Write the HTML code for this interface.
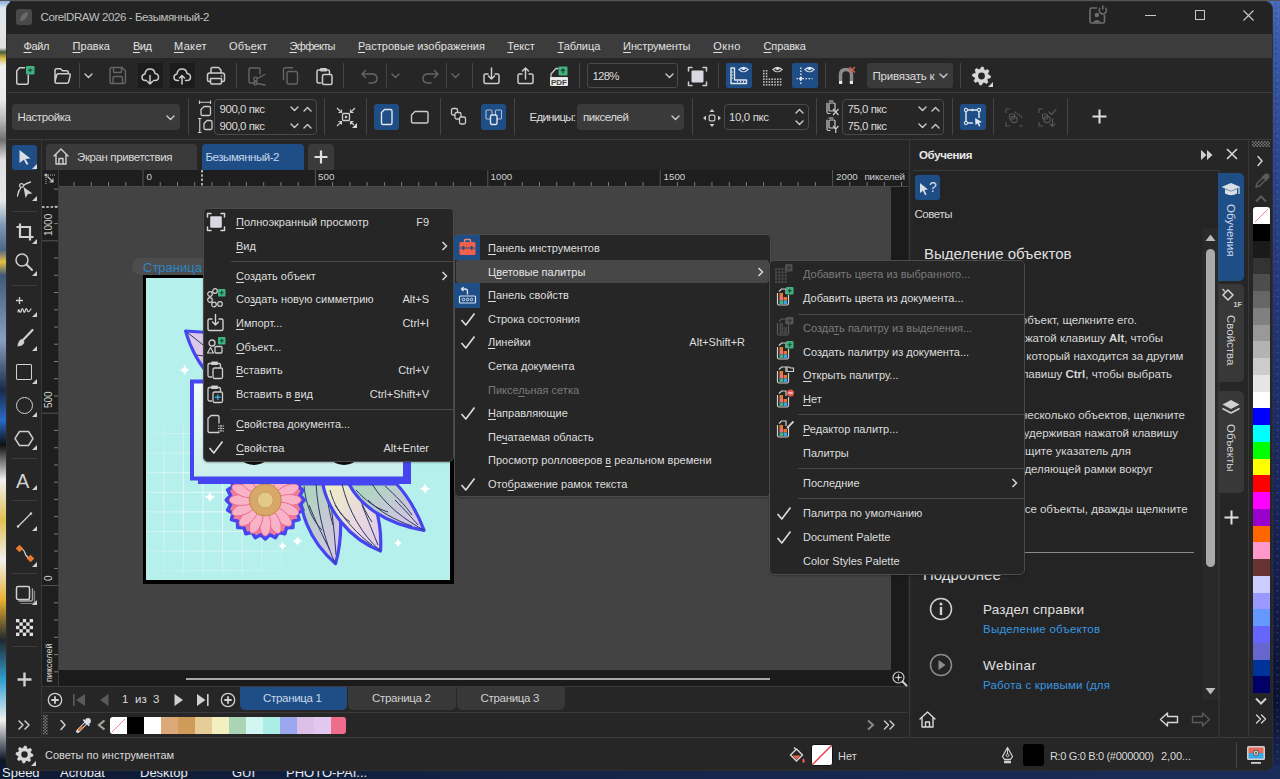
<!DOCTYPE html>
<html><head><meta charset="utf-8"><title>CorelDRAW</title>
<style>
*{margin:0;padding:0;box-sizing:border-box}
html,body{width:1280px;height:779px;overflow:hidden}
body{position:relative;background:#14213d;font-family:"Liberation Sans",sans-serif;font-size:11px;color:#dcdcdc}
.a{position:absolute}
.t{white-space:nowrap}
u{text-decoration:underline;text-underline-offset:2px;text-decoration-thickness:1px}
svg{overflow:visible}
</style></head><body>

<div class="a" style="left:0;top:0;width:10px;height:779px;background:linear-gradient(#7aa8d8 0px,#dde8f0 8px,#e6e6e6 30px,#e0e0e0 48px,#4a5a3a 52px,#d8b848 58px,#f0f0f0 66px,#e8e8e8 100px,#b8b8b8 120px,#707070 140px,#e0e0e0 160px,#e8e8e8 200px,#8098b8 225px,#506888 250px,#e8c040 262px,#405878 275px,#8aa0c0 340px,#1a2a48 390px,#2a6ac8 420px,#101010 445px,#f0f0f0 480px,#e0c050 520px,#f0f0f0 560px,#e8b030 600px,#202830 640px,#30a0d0 680px,#f0f0f0 720px,#101828 760px)"></div>
<div class="a" style="left:1266px;top:0;width:14px;height:779px;background:linear-gradient(#4a6ab8 0px,#3a5aa8 40px,#2e4890 150px,#24387a 300px,#1c2a60 450px,#141c48 600px,#0c1230 700px,#1a2a58 779px)"></div>
<div class="a" style="left:1266px;top:0;width:14px;height:779px;opacity:0.2;background-image:radial-gradient(circle at 30% 40%,#8aa8e8 0.7px,transparent 1.3px),radial-gradient(circle at 70% 70%,#0a1030 0.7px,transparent 1.3px);background-size:5px 7px,6px 5px"></div>
<div class="a" style="left:0;top:765px;width:1280px;height:14px;background:linear-gradient(90deg,#0e1a33,#15254a 50%,#1a2d5a)"></div>
<div class="a t" style="left:2px;top:766px;font-size:13px;line-height:13px;color:#e8e8e8">Speed</div>
<div class="a t" style="left:60px;top:766px;font-size:13px;line-height:13px;color:#e8e8e8">Acrobat</div>
<div class="a t" style="left:140px;top:766px;font-size:13px;line-height:13px;color:#e8e8e8">Desktop</div>
<div class="a t" style="left:232px;top:766px;font-size:13px;line-height:13px;color:#e8e8e8">GUI</div>
<div class="a t" style="left:286px;top:766px;font-size:13px;line-height:13px;color:#e8e8e8">PHOTO-PAI...</div>
<div class="a" style="left:0;top:0;width:1280px;height:1px;background:#555"></div>
<div class="a" style="left:6px;top:1px;width:1267px;height:770px;border-radius:8px;overflow:hidden;background:#262626;border:1px solid #2e2e2e"><div class="a" style="left:-7px;top:-2px;width:1280px;height:779px">
<div class="a" style="left:0px;top:0px;width:1280px;height:34px;background:#232323;"></div>
<div class="a" style="left:0px;top:34px;width:1280px;height:24px;background:#3c3c3c;"></div>
<div class="a" style="left:0px;top:58px;width:1280px;height:34px;background:#262626;"></div>
<div class="a" style="left:0px;top:92px;width:1280px;height:1px;background:#3a3a3a;"></div>
<div class="a" style="left:0px;top:93px;width:1280px;height:46px;background:#262626;"></div>
<div class="a" style="left:0px;top:139px;width:1280px;height:1px;background:#3a3a3a;"></div>
<div class="a" style="left:0px;top:140px;width:41px;height:597px;background:#262626;"></div>
<div class="a" style="left:41px;top:140px;width:1px;height:597px;background:#383838;"></div>
<div class="a" style="left:42px;top:140px;width:868px;height:30px;background:#262626;"></div>
<div class="a" style="left:42px;top:170px;width:866px;height:16px;background:#1e1e1e;"></div>
<div class="a" style="left:42px;top:186px;width:866px;height:1px;background:#4a4a4a;"></div>
<div class="a" style="left:42px;top:186px;width:16px;height:500px;background:#1e1e1e;"></div>
<div class="a" style="left:58px;top:170px;width:1px;height:516px;background:#3a3a3a;"></div>
<div class="a" style="left:59px;top:187px;width:832px;height:483px;background:#434343;"></div>
<div class="a" style="left:891px;top:187px;width:17px;height:483px;background:#1b1b1b;"></div>
<div class="a" style="left:59px;top:670px;width:849px;height:16px;background:#1b1b1b;"></div>
<div class="a" style="left:42px;top:686px;width:868px;height:1px;background:#3a3a3a;"></div>
<div class="a" style="left:42px;top:687px;width:868px;height:25px;background:#262626;"></div>
<div class="a" style="left:42px;top:712px;width:868px;height:1px;background:#3a3a3a;"></div>
<div class="a" style="left:42px;top:713px;width:868px;height:24px;background:#262626;"></div>
<div class="a" style="left:908px;top:140px;width:2px;height:597px;background:#262626;"></div>
<div class="a" style="left:909px;top:140px;width:1px;height:597px;background:#383838;"></div>
<div class="a" style="left:910px;top:140px;width:339px;height:597px;background:#262626;"></div>
<div class="a" style="left:913px;top:170px;width:305px;height:567px;background:#242424;border-top:1px solid #383838"></div>
<div class="a" style="left:1202px;top:228px;width:16px;height:472px;background:#292929;"></div>
<div class="a" style="left:1218px;top:170px;width:2px;height:567px;background:#303030;"></div>
<div class="a" style="left:1248px;top:140px;width:1px;height:597px;background:#383838;"></div>
<div class="a" style="left:1249px;top:140px;width:24px;height:597px;background:#262626;"></div>
<div class="a" style="left:0px;top:737px;width:1280px;height:1px;background:#3a3a3a;"></div>
<div class="a" style="left:0px;top:738px;width:1280px;height:34px;background:#262626;"></div>
<div class="a" style="left:16px;top:9px;width:16px;height:16px;border-radius:3px;background:#4a4a4a"></div>
<svg class="a" style="left:16px;top:9px;" width="16" height="16" viewBox="0 0 16 16"><path d="M4 12 C4 7 8 3 12 3 C12 8 9 12 4 12 Z" fill="#6a6a6a"/></svg>
<div class="a t" style="left:40.5px;top:12.27px;font-size:11.5px;line-height:11.5px;color:#c0c0c0;font-weight:400;letter-spacing:-0.399px;">CorelDRAW 2026 - Безымянный-2</div>
<svg class="a" style="left:1088px;top:4px;" width="20" height="20" viewBox="0 0 20 20"><path d="M9 4 H3.5 Q2 4 2 5.5 V17.5 Q2 19 3.5 19 H15 Q16.5 19 16.5 17.5 V11" fill="none" stroke="#6e6e6e" stroke-width="1.6"/><circle cx="8.8" cy="11" r="2.2" fill="#6e6e6e"/><path d="M4.5 18.5 Q8.8 13.5 13.2 18.5 Z" fill="#6e6e6e"/><path d="M12.2 3.8 A3.6 3.6 0 1 0 17.4 3.8" fill="none" stroke="#6e6e6e" stroke-width="1.5"/><path d="M14.8 1.5 V5.5" stroke="#6e6e6e" stroke-width="1.5"/></svg>
<div class="a" style="left:1145px;top:15px;width:11px;height:1px;background:#c8c8c8;"></div>
<div class="a" style="left:1195px;top:10px;width:10px;height:10px;border:1px solid #c8c8c8"></div>
<svg class="a" style="left:1243px;top:10px;" width="11" height="11" viewBox="0 0 11 11"><path d="M0.5 0.5 L10.5 10.5 M10.5 0.5 L0.5 10.5" stroke="#c8c8c8" stroke-width="1.1"/></svg>
<div class="a t" style="left:23.5px;top:41.39px;font-size:11px;line-height:11px;color:#e0e0e0;font-weight:400;letter-spacing:-0.415px;"><u>Ф</u>айл</div>
<div class="a t" style="left:72.5px;top:41.39px;font-size:11px;line-height:11px;color:#e0e0e0;font-weight:400;letter-spacing:0.048px;"><u>П</u>равка</div>
<div class="a t" style="left:133.0px;top:41.39px;font-size:11px;line-height:11px;color:#e0e0e0;font-weight:400;letter-spacing:-0.500px;"><u>В</u>ид</div>
<div class="a t" style="left:174.0px;top:41.39px;font-size:11px;line-height:11px;color:#e0e0e0;font-weight:400;letter-spacing:0.342px;"><u>М</u>акет</div>
<div class="a t" style="left:229.0px;top:41.39px;font-size:11px;line-height:11px;color:#e0e0e0;font-weight:400;letter-spacing:0.128px;">Объ<u>е</u>кт</div>
<div class="a t" style="left:289.5px;top:41.39px;font-size:11px;line-height:11px;color:#e0e0e0;font-weight:400;letter-spacing:-0.668px;"><u>Э</u>ффекты</div>
<div class="a t" style="left:358.0px;top:41.39px;font-size:11px;line-height:11px;color:#e0e0e0;font-weight:400;letter-spacing:0.037px;"><u>Р</u>астровые изображения</div>
<div class="a t" style="left:507.3px;top:41.39px;font-size:11px;line-height:11px;color:#e0e0e0;font-weight:400;letter-spacing:-0.074px;"><u>Т</u>екст</div>
<div class="a t" style="left:557.5px;top:41.39px;font-size:11px;line-height:11px;color:#e0e0e0;font-weight:400;letter-spacing:-0.055px;"><u>Т</u>аблица</div>
<div class="a t" style="left:623.1px;top:41.39px;font-size:11px;line-height:11px;color:#e0e0e0;font-weight:400;letter-spacing:-0.119px;"><u>И</u>нструменты</div>
<div class="a t" style="left:713.3px;top:41.39px;font-size:11px;line-height:11px;color:#e0e0e0;font-weight:400;letter-spacing:0.480px;"><u>О</u>кно</div>
<div class="a t" style="left:763.5px;top:41.39px;font-size:11px;line-height:11px;color:#e0e0e0;font-weight:400;letter-spacing:-0.125px;"><u>С</u>правка</div>
<svg class="a" style="left:15px;top:66px;" width="20" height="20" viewBox="0 0 20 20"><path d="M4.5 1.75 H9.5 M1.75 5 V16.5 Q1.75 18.25 3.5 18.25 H11.5 Q13.25 18.25 13.25 16.5 V9 M1.75 5 L4.5 1.75" fill="none" stroke="#cccccc" stroke-width="1.5" stroke-linejoin="round" stroke-linecap="round"/><rect x="11" y="0" width="8.5" height="8.5" rx="1" fill="#3fb27f"/><path d="M15.25 2.2 V6.3 M13.2 4.25 H17.3" stroke="#1e5a40" stroke-width="1.3"/></svg>
<svg class="a" style="left:53px;top:67px;" width="20" height="18" viewBox="0 0 20 18"><path d="M2 14.5 V3.5 Q2 1.75 3.75 1.75 H7.5 L9.5 3.75 H13.5 Q15.25 3.75 15.25 5.5 V6.75 M2 14.5 L3.75 7.75 Q4.2 6.75 5.5 6.75 H16 Q17.6 6.75 17.2 8.3 L15.8 14.5 Q15.4 16.25 13.8 16.25 H3.75 Q2 16.25 2 14.5 Z" fill="none" stroke="#cccccc" stroke-width="1.5" stroke-linejoin="round" stroke-linecap="round"/></svg>
<div class="a" style="left:79px;top:63px;width:1px;height:25px;background:#444444;"></div>
<svg class="a" style="left:84px;top:73px;" width="9" height="6" viewBox="0 0 9 6"><path d="M1 1 L4.5 4.5 L8 1" fill="none" stroke="#cccccc" stroke-width="1.4" stroke-linejoin="round" stroke-linecap="round"/></svg>
<svg class="a" style="left:108px;top:66px;" width="19" height="19" viewBox="0 0 19 19"><path d="M2 3 Q2 1.5 3.5 1.5 H14 L17.5 5 V15.5 Q17.5 17.5 15.5 17.5 H3.5 Q2 17.5 2 16 Z M5.5 1.5 V5.5 Q5.5 6.5 6.5 6.5 H12.5 Q13.5 6.5 13.5 5.5 V1.5 M5 17.5 V12 Q5 10.5 6.5 10.5 H13 Q14.5 10.5 14.5 12 V17.5" fill="none" stroke="#666666" stroke-width="1.4" stroke-linejoin="round" stroke-linecap="round"/></svg>
<div class="a" style="left:138px;top:63px;width:25px;height:25px;background:#1c1c1c;"></div>
<div class="a" style="left:170px;top:63px;width:25px;height:25px;background:#1c1c1c;"></div>
<svg class="a" style="left:141px;top:67px;" width="19" height="19" viewBox="0 0 19 19"><path d="M5.5 13.5 H4.5 Q1 13.5 1 10.25 Q1 7.5 4 7 Q4.5 2 9 2 Q13.5 2 14 6.5 Q17.5 6.75 17.5 10.25 Q17.5 13.5 14 13.5 H12.5" fill="none" stroke="#cccccc" stroke-width="1.5" stroke-linejoin="round" stroke-linecap="round"/><path d="M9 8.5 V17 M6.5 14.5 L9 17 L11.5 14.5" fill="none" stroke="#cccccc" stroke-width="1.5" stroke-linejoin="round" stroke-linecap="round"/></svg>
<svg class="a" style="left:173px;top:67px;" width="19" height="19" viewBox="0 0 19 19"><path d="M5.5 13.5 H4.5 Q1 13.5 1 10.25 Q1 7.5 4 7 Q4.5 2 9 2 Q13.5 2 14 6.5 Q17.5 6.75 17.5 10.25 Q17.5 13.5 14 13.5 H12.5" fill="none" stroke="#cccccc" stroke-width="1.5" stroke-linejoin="round" stroke-linecap="round"/><path d="M9 17 V8.5 M6.5 11 L9 8.5 L11.5 11" fill="none" stroke="#cccccc" stroke-width="1.5" stroke-linejoin="round" stroke-linecap="round"/></svg>
<svg class="a" style="left:206px;top:66px;" width="20" height="20" viewBox="0 0 20 20"><path d="M5 7 V3 Q5 1.5 6.5 1.5 H12.5 L15 4 V7" fill="none" stroke="#cccccc" stroke-width="1.5" stroke-linejoin="round" stroke-linecap="round"/><path d="M4.5 15.5 H3 Q1.5 15.5 1.5 14 V9 Q1.5 7 3.5 7 H16.5 Q18.5 7 18.5 9 V14 Q18.5 15.5 17 15.5 H15.5" fill="none" stroke="#cccccc" stroke-width="1.5" stroke-linejoin="round" stroke-linecap="round"/><path d="M4.5 12.5 H15.5 V16.5 Q15.5 18 14 18 H6 Q4.5 18 4.5 16.5 Z" fill="none" stroke="#cccccc" stroke-width="1.5" stroke-linejoin="round" stroke-linecap="round"/><circle cx="15.5" cy="10" r="0.8" fill="#cccccc"/></svg>
<div class="a" style="left:236px;top:63px;width:1px;height:25px;background:#444444;"></div>
<svg class="a" style="left:247px;top:66px;" width="20" height="20" viewBox="0 0 20 20"><path d="M8 17 H3.5 Q2 17 2 15.5 V3.5 Q2 2 3.5 2 H11.5 Q13 2 13 3.5 V8" fill="none" stroke="#666666" stroke-width="1.4" stroke-linejoin="round" stroke-linecap="round"/><circle cx="8.5" cy="13" r="1.8" fill="none" stroke="#666666" stroke-width="1.3" stroke-linejoin="round" stroke-linecap="round"/><circle cx="8.5" cy="17.3" r="1.8" fill="none" stroke="#666666" stroke-width="1.3" stroke-linejoin="round" stroke-linecap="round"/><path d="M10.2 12.5 L18 8.5 M10.2 17.5 L18 19" fill="none" stroke="#666666" stroke-width="1.3" stroke-linejoin="round" stroke-linecap="round"/></svg>
<svg class="a" style="left:281px;top:66px;" width="20" height="20" viewBox="0 0 20 20"><path d="M2.5 13.5 V3.5 Q2.5 1.8 4.2 1.8 H11.5" fill="none" stroke="#666666" stroke-width="1.4" stroke-linejoin="round" stroke-linecap="round"/><rect x="6" y="5.5" width="10.5" height="12.5" rx="2" fill="none" stroke="#666666" stroke-width="1.4" stroke-linejoin="round" stroke-linecap="round"/></svg>
<svg class="a" style="left:315px;top:66px;" width="20" height="20" viewBox="0 0 20 20"><path d="M5 4 H3.5 Q2 4 2 5.5 V15.5 Q2 17 3.5 17 H6" fill="none" stroke="#cccccc" stroke-width="1.5" stroke-linejoin="round" stroke-linecap="round"/><path d="M11.5 4 H13 Q14.5 4 14.5 5.5 V8" fill="none" stroke="#cccccc" stroke-width="1.5" stroke-linejoin="round" stroke-linecap="round"/><rect x="5" y="2" width="7" height="3.5" rx="1" fill="#cccccc"/><rect x="7.5" y="8.5" width="9.5" height="10" rx="1.5" fill="none" stroke="#cccccc" stroke-width="1.5" stroke-linejoin="round" stroke-linecap="round"/></svg>
<div class="a" style="left:343px;top:63px;width:1px;height:25px;background:#444444;"></div>
<svg class="a" style="left:360px;top:67px;" width="20" height="18" viewBox="0 0 20 18"><path d="M5.5 3.5 L2 7 L5.5 10.5 M2 7 H12 Q17 7 17 11.5 Q17 16 12 16 H9" fill="none" stroke="#666666" stroke-width="1.4" stroke-linejoin="round" stroke-linecap="round"/></svg>
<div class="a" style="left:386px;top:63px;width:1px;height:25px;background:#444444;"></div>
<svg class="a" style="left:391px;top:73px;" width="9" height="6" viewBox="0 0 9 6"><path d="M1 1 L4.5 4.5 L8 1" fill="none" stroke="#666666" stroke-width="1.4" stroke-linejoin="round" stroke-linecap="round"/></svg>
<svg class="a" style="left:420px;top:67px;" width="20" height="18" viewBox="0 0 20 18"><path d="M14.5 3.5 L18 7 L14.5 10.5 M18 7 H8 Q3 7 3 11.5 Q3 16 8 16 H11" fill="none" stroke="#666666" stroke-width="1.4" stroke-linejoin="round" stroke-linecap="round"/></svg>
<div class="a" style="left:446px;top:63px;width:1px;height:25px;background:#444444;"></div>
<svg class="a" style="left:451px;top:73px;" width="9" height="6" viewBox="0 0 9 6"><path d="M1 1 L4.5 4.5 L8 1" fill="none" stroke="#666666" stroke-width="1.4" stroke-linejoin="round" stroke-linecap="round"/></svg>
<div class="a" style="left:472px;top:63px;width:1px;height:25px;background:#444444;"></div>
<svg class="a" style="left:482px;top:66px;" width="20" height="20" viewBox="0 0 20 20"><path d="M6 8 H3.5 Q2 8 2 9.5 V16 Q2 17.5 3.5 17.5 H15.5 Q17 17.5 17 16 V9.5 Q17 8 15.5 8 H13" fill="none" stroke="#cccccc" stroke-width="1.5" stroke-linejoin="round" stroke-linecap="round"/><path d="M9.5 2 V13 M6.5 10 L9.5 13 L12.5 10" fill="none" stroke="#cccccc" stroke-width="1.5" stroke-linejoin="round" stroke-linecap="round"/></svg>
<svg class="a" style="left:516px;top:66px;" width="20" height="20" viewBox="0 0 20 20"><path d="M6 8 H3.5 Q2 8 2 9.5 V16 Q2 17.5 3.5 17.5 H15.5 Q17 17.5 17 16 V9.5 Q17 8 15.5 8 H13" fill="none" stroke="#cccccc" stroke-width="1.5" stroke-linejoin="round" stroke-linecap="round"/><path d="M9.5 13 V2 M6.5 5 L9.5 2 L12.5 5" fill="none" stroke="#cccccc" stroke-width="1.5" stroke-linejoin="round" stroke-linecap="round"/></svg>
<svg class="a" style="left:549px;top:66px;" width="21" height="21" viewBox="0 0 21 21"><path d="M2 11 V8 L7 2.5 H9" fill="none" stroke="#cccccc" stroke-width="1.3" stroke-linejoin="round" stroke-linecap="round"/><rect x="9.5" y="0.5" width="9" height="9" rx="1" fill="#3fb27f"/><path d="M14 7.5 V3 M12 5 L14 3 L16 5" stroke="#1a4a34" stroke-width="1.2" fill="none"/><rect x="1" y="11" width="18" height="9" rx="1" fill="#e8e8e8"/><text x="10" y="18.5" font-family="Liberation Sans" font-size="8" font-weight="700" fill="#444" text-anchor="middle">PDF</text></svg>
<div class="a" style="left:579px;top:63px;width:1px;height:25px;background:#444444;"></div>
<div class="a" style="left:587px;top:63px;width:91px;height:25px;border:1px solid #4a4a4a;border-radius:3px;background:#262626"></div>
<div class="a t" style="left:592.5px;top:70.77px;font-size:11.5px;line-height:11.5px;color:#dcdcdc;font-weight:400;letter-spacing:-0.804px;">128%</div>
<svg class="a" style="left:665px;top:73px;" width="9" height="6" viewBox="0 0 9 6"><path d="M1 1 L4.5 4.5 L8 1" fill="none" stroke="#cccccc" stroke-width="1.4" stroke-linejoin="round" stroke-linecap="round"/></svg>
<svg class="a" style="left:687px;top:66px;" width="21" height="21" viewBox="0 0 21 21"><path d="M1.5 5 V1.5 H5 M16 1.5 H19.5 V5 M19.5 16 V19.5 H16 M5 19.5 H1.5 V16" fill="none" stroke="#cccccc" stroke-width="1.5" stroke-linejoin="round" stroke-linecap="round"/><rect x="4.5" y="4.5" width="12" height="12" rx="1" fill="#d8d8e0"/></svg>
<div class="a" style="left:718px;top:63px;width:1px;height:25px;background:#444444;"></div>
<div class="a" style="left:726px;top:63px;width:26px;height:25px;border-radius:2px;background:#1f4d85"></div>
<svg class="a" style="left:729px;top:66px;" width="20" height="20" viewBox="0 0 20 20"><path d="M2 2 V17.5 H17.5 V14 H5.5 V2 Z" fill="none" stroke="#e0e6ee" stroke-width="1.4" stroke-linejoin="round" stroke-linecap="round"/><path d="M2.5 6 H4 M2.5 9 H4 M2.5 12 H4 M8.5 16.5 V15 M11.5 16.5 V15 M14.5 16.5 V15" stroke="#e0e6ee" stroke-width="1"/><path d="M9 3.5 Q14.5 -2 20 3.5 Q14.5 9 9 3.5 Z" fill="#e0e6ee"/><path d="M11.5 3 Q14.5 6.5 17.5 3" fill="none" stroke="#1f4d85" stroke-width="1.3"/></svg>
<svg class="a" style="left:762px;top:66px;" width="21" height="21" viewBox="0 0 21 21"><g fill="#bdbdbd"><rect x="1.0" y="4.0" width="1.6" height="1.6"/><rect x="1.0" y="6.8" width="1.6" height="1.6"/><rect x="1.0" y="9.6" width="1.6" height="1.6"/><rect x="1.0" y="12.399999999999999" width="1.6" height="1.6"/><rect x="1.0" y="15.2" width="1.6" height="1.6"/><rect x="1.0" y="18.0" width="1.6" height="1.6"/><rect x="3.8" y="4.0" width="1.6" height="1.6"/><rect x="3.8" y="6.8" width="1.6" height="1.6"/><rect x="3.8" y="9.6" width="1.6" height="1.6"/><rect x="3.8" y="12.399999999999999" width="1.6" height="1.6"/><rect x="3.8" y="15.2" width="1.6" height="1.6"/><rect x="3.8" y="18.0" width="1.6" height="1.6"/><rect x="6.6" y="12.399999999999999" width="1.6" height="1.6"/><rect x="6.6" y="15.2" width="1.6" height="1.6"/><rect x="6.6" y="18.0" width="1.6" height="1.6"/><rect x="9.399999999999999" y="12.399999999999999" width="1.6" height="1.6"/><rect x="9.399999999999999" y="15.2" width="1.6" height="1.6"/><rect x="9.399999999999999" y="18.0" width="1.6" height="1.6"/><rect x="12.2" y="12.399999999999999" width="1.6" height="1.6"/><rect x="12.2" y="15.2" width="1.6" height="1.6"/><rect x="12.2" y="18.0" width="1.6" height="1.6"/><rect x="15.0" y="12.399999999999999" width="1.6" height="1.6"/><rect x="15.0" y="15.2" width="1.6" height="1.6"/><rect x="15.0" y="18.0" width="1.6" height="1.6"/><rect x="17.799999999999997" y="12.399999999999999" width="1.6" height="1.6"/><rect x="17.799999999999997" y="15.2" width="1.6" height="1.6"/><rect x="17.799999999999997" y="18.0" width="1.6" height="1.6"/></g><path d="M10 3.5 Q15.5 -2 21 3.5 Q15.5 9 10 3.5 Z" fill="#d8d8d8"/><path d="M12.5 3 Q15.5 6.5 18.5 3" fill="none" stroke="#262626" stroke-width="1.3"/></svg>
<div class="a" style="left:792px;top:63px;width:26px;height:25px;border-radius:2px;background:#1f4d85"></div>
<svg class="a" style="left:795px;top:66px;" width="20" height="20" viewBox="0 0 20 20"><path d="M5.8 1.5 V18 M1.5 12.6 H17.5" stroke="#dfe6ee" stroke-width="1.4" stroke-dasharray="1.5 1.5"/><circle cx="5.8" cy="12.6" r="1.7" fill="#dfe6ee"/><path d="M9 3.5 Q14.5 -2 20 3.5 Q14.5 9 9 3.5 Z" fill="#e0e6ee"/><path d="M11.5 3 Q14.5 6.5 17.5 3" fill="none" stroke="#1f4d85" stroke-width="1.3"/></svg>
<div class="a" style="left:825px;top:63px;width:1px;height:25px;background:#444444;"></div>
<svg class="a" style="left:837px;top:66px;" width="20" height="20" viewBox="0 0 20 20"><path d="M3.5 15 V9 Q3.5 3.5 9 3.5 Q14.5 3.5 14.5 9 V15" fill="none" stroke="#8a8a8a" stroke-width="3.5"/><rect x="2" y="15" width="3.2" height="3" fill="#e8e8e8"/><rect x="12.8" y="15" width="3.2" height="3" fill="#e8e8e8"/><path d="M12.5 1 L18 6.5 M18 1 L12.5 6.5" stroke="#e0604a" stroke-width="1.3"/></svg>
<div class="a" style="left:867px;top:63px;width:86px;height:25px;border-radius:3px;background:#3a3a3a"></div>
<div class="a t" style="left:872.5px;top:70.77px;font-size:11.5px;line-height:11.5px;color:#dcdcdc;font-weight:400;letter-spacing:-0.219px;">Привяза<u>т</u>ь к</div>
<svg class="a" style="left:939px;top:73px;" width="9" height="6" viewBox="0 0 9 6"><path d="M1 1 L4.5 4.5 L8 1" fill="none" stroke="#cccccc" stroke-width="1.4" stroke-linejoin="round" stroke-linecap="round"/></svg>
<div class="a" style="left:960px;top:63px;width:1px;height:25px;background:#444444;"></div>
<svg class="a" style="left:971px;top:66px;" width="24" height="22" viewBox="0 0 24 22"><polygon points="10.50,1.00 12.26,1.17 13.05,3.85 14.20,4.46 16.86,3.64 17.98,5.00 16.65,7.45 17.03,8.70 19.50,10.00 19.33,11.76 16.65,12.55 16.04,13.70 16.86,16.36 15.50,17.48 13.05,16.15 11.80,16.53 10.50,19.00 8.74,18.83 7.95,16.15 6.80,15.54 4.14,16.36 3.02,15.00 4.35,12.55 3.97,11.30 1.50,10.00 1.67,8.24 4.35,7.45 4.96,6.30 4.14,3.64 5.50,2.52 7.95,3.85 9.20,3.47" fill="#d8d8d8" stroke="#d8d8d8" stroke-width="0.8" stroke-linejoin="round"/><circle cx="10.5" cy="10" r="3.42" fill="#262626"/><path d="M22 16 V21 H17 Z" fill="#d8d8d8"/></svg>
<div class="a" style="left:12px;top:104px;width:168px;height:26px;border-radius:4px;background:#3a3a3a"></div>
<div class="a t" style="left:17.5px;top:111.77px;font-size:11.5px;line-height:11.5px;color:#dcdcdc;font-weight:400;letter-spacing:-0.389px;">Настройка</div>
<svg class="a" style="left:166px;top:115px;" width="9" height="6" viewBox="0 0 9 6"><path d="M1 1 L4.5 4.5 L8 1" fill="none" stroke="#cccccc" stroke-width="1.4" stroke-linejoin="round" stroke-linecap="round"/></svg>
<div class="a" style="left:188px;top:98px;width:1px;height:37px;background:#444444;"></div>
<svg class="a" style="left:197px;top:99px;" width="16" height="36" viewBox="0 0 16 36"><path d="M2.5 1.5 V5 M13.5 1.5 V5 M2.5 3.25 H13.5" stroke="#cccccc" stroke-width="1.2"/><path d="M7 7.5 H12 Q13.5 7.5 13.5 9 V15 Q13.5 16.5 12 16.5 H5.5 Q4 16.5 4 15 V10.5 Z" fill="none" stroke="#cccccc" stroke-width="1.3" stroke-linejoin="round" stroke-linecap="round"/><path d="M1 19.5 H4.5 M1 33.5 H4.5 M2.75 19.5 V33.5" stroke="#cccccc" stroke-width="1.2"/><path d="M10 21.5 H13.5 Q15 21.5 15 23 V29 Q15 30.5 13.5 30.5 H8.5 Q7 30.5 7 29 V24.5 Z" fill="none" stroke="#cccccc" stroke-width="1.3" stroke-linejoin="round" stroke-linecap="round"/></svg>
<div class="a" style="left:214px;top:99px;width:103px;height:36px;border:1px solid #4a4a4a;border-radius:4px"></div>
<div class="a t" style="left:219.5px;top:103.77px;font-size:11.5px;line-height:11.5px;color:#dcdcdc;font-weight:400;letter-spacing:-0.451px;">900,0 пкс</div>
<div class="a t" style="left:219.5px;top:120.77px;font-size:11.5px;line-height:11.5px;color:#dcdcdc;font-weight:400;letter-spacing:-0.451px;">900,0 пкс</div>
<svg class="a" style="left:290px;top:106px;" width="9" height="6" viewBox="0 0 9 6"><path d="M1 1 L4.5 4.5 L8 1" fill="none" stroke="#cccccc" stroke-width="1.4" stroke-linejoin="round" stroke-linecap="round"/></svg>
<svg class="a" style="left:303px;top:106px;" width="9" height="6" viewBox="0 0 9 6"><path d="M1 5 L4.5 1.5 L8 5" fill="none" stroke="#cccccc" stroke-width="1.4" stroke-linejoin="round" stroke-linecap="round"/></svg>
<svg class="a" style="left:290px;top:123px;" width="9" height="6" viewBox="0 0 9 6"><path d="M1 1 L4.5 4.5 L8 1" fill="none" stroke="#cccccc" stroke-width="1.4" stroke-linejoin="round" stroke-linecap="round"/></svg>
<svg class="a" style="left:303px;top:123px;" width="9" height="6" viewBox="0 0 9 6"><path d="M1 5 L4.5 1.5 L8 5" fill="none" stroke="#cccccc" stroke-width="1.4" stroke-linejoin="round" stroke-linecap="round"/></svg>
<div class="a" style="left:324px;top:98px;width:1px;height:37px;background:#444444;"></div>
<svg class="a" style="left:335px;top:106px;" width="23" height="23" viewBox="0 0 23 23"><path d="M2 2 L6.5 6.5 M6.5 3.5 V6.5 H3.5 M20 2 L15.5 6.5 M15.5 3.5 V6.5 H18.5 M2 20 L6.5 15.5 M6.5 18.5 V15.5 H3.5" stroke="#cccccc" stroke-width="1.2" fill="none"/><rect x="7.5" y="7.5" width="7" height="7" rx="1" fill="none" stroke="#cccccc" stroke-width="1.3" stroke-linejoin="round" stroke-linecap="round"/><circle cx="11" cy="11" r="1.3" fill="#cccccc"/><path d="M15.5 15.5 L19 19 M15.5 18.5 V15.5 H18.5" stroke="#cccccc" stroke-width="1.2" fill="none"/><path d="M22 17 V22 H17 Z" fill="#d8d8d8"/></svg>
<div class="a" style="left:366px;top:98px;width:1px;height:37px;background:#444444;"></div>
<div class="a" style="left:374px;top:104px;width:25px;height:26px;border-radius:3px;background:#1f4d85"></div>
<svg class="a" style="left:379px;top:108px;" width="16" height="18" viewBox="0 0 16 18"><path d="M5.5 1.5 H11.5 Q13 1.5 13 3 V15 Q13 16.5 11.5 16.5 H4 Q2.5 16.5 2.5 15 V4.5 Z" fill="none" stroke="#e0e6ee" stroke-width="1.4" stroke-linejoin="round" stroke-linecap="round"/></svg>
<svg class="a" style="left:410px;top:109px;" width="20" height="16" viewBox="0 0 20 16"><path d="M5 2.5 H16.5 Q18 2.5 18 4 V12.5 Q18 14 16.5 14 H3 Q1.5 14 1.5 12.5 V6 Z" fill="none" stroke="#cccccc" stroke-width="1.4" stroke-linejoin="round" stroke-linecap="round"/></svg>
<div class="a" style="left:440px;top:98px;width:1px;height:37px;background:#444444;"></div>
<svg class="a" style="left:450px;top:107px;" width="20" height="20" viewBox="0 0 20 20"><rect x="1.5" y="1.5" width="6" height="6.5" rx="1.5" fill="none" stroke="#cccccc" stroke-width="1.3" stroke-linejoin="round" stroke-linecap="round"/><rect x="5" y="5.5" width="6" height="6.5" rx="1.5" fill="#262626" fill="none" stroke="#cccccc" stroke-width="1.3" stroke-linejoin="round" stroke-linecap="round"/><rect x="9.5" y="10" width="6" height="7" rx="1.5" fill="#262626" fill="none" stroke="#cccccc" stroke-width="1.3" stroke-linejoin="round" stroke-linecap="round"/></svg>
<div class="a" style="left:481px;top:104px;width:25px;height:26px;border-radius:3px;background:#1f4d85"></div>
<svg class="a" style="left:484px;top:107px;" width="20" height="20" viewBox="0 0 20 20"><rect x="2" y="3" width="6" height="9" rx="1" fill="none" stroke="#aabbd0" stroke-width="1.1" stroke-linejoin="round" stroke-linecap="round"/><rect x="11.5" y="3" width="6" height="9" rx="1" fill="none" stroke="#aabbd0" stroke-width="1.1" stroke-linejoin="round" stroke-linecap="round"/><rect x="6.5" y="8" width="6.5" height="9.5" rx="1.5" fill="#1f4d85" fill="none" stroke="#e0e6ee" stroke-width="1.4" stroke-linejoin="round" stroke-linecap="round"/></svg>
<div class="a" style="left:514px;top:98px;width:1px;height:37px;background:#444444;"></div>
<div class="a t" style="left:529.5px;top:111.77px;font-size:11.5px;line-height:11.5px;color:#dcdcdc;font-weight:400;letter-spacing:-0.732px;">Единицы:</div>
<div class="a" style="left:577px;top:104px;width:107px;height:26px;border-radius:4px;background:#3a3a3a"></div>
<div class="a t" style="left:583px;top:111.77px;font-size:11.5px;line-height:11.5px;color:#dcdcdc;font-weight:400;letter-spacing:-0.444px;">пикселей</div>
<svg class="a" style="left:671px;top:115px;" width="9" height="6" viewBox="0 0 9 6"><path d="M1 1 L4.5 4.5 L8 1" fill="none" stroke="#cccccc" stroke-width="1.4" stroke-linejoin="round" stroke-linecap="round"/></svg>
<div class="a" style="left:692px;top:98px;width:1px;height:37px;background:#444444;"></div>
<svg class="a" style="left:702px;top:108px;" width="20" height="20" viewBox="0 0 20 20"><path d="M10 1 L12.5 4 H7.5 Z M10 19 L12.5 16 H7.5 Z M1 10 L4 7.5 V12.5 Z M19 10 L16 7.5 V12.5 Z" fill="#cccccc"/><rect x="7.2" y="7.2" width="5.6" height="5.6" rx="1" fill="none" stroke="#cccccc" stroke-width="1.2" stroke-linejoin="round" stroke-linecap="round"/></svg>
<div class="a" style="left:724px;top:104px;width:85px;height:26px;border:1px solid #4a4a4a;border-radius:4px"></div>
<div class="a t" style="left:729px;top:111.77px;font-size:11.5px;line-height:11.5px;color:#dcdcdc;font-weight:400;letter-spacing:-0.388px;">10,0 пкс</div>
<svg class="a" style="left:795px;top:108px;" width="9" height="6" viewBox="0 0 9 6"><path d="M1 5 L4.5 1.5 L8 5" fill="none" stroke="#cccccc" stroke-width="1.4" stroke-linejoin="round" stroke-linecap="round"/></svg>
<svg class="a" style="left:795px;top:120px;" width="9" height="6" viewBox="0 0 9 6"><path d="M1 1 L4.5 4.5 L8 1" fill="none" stroke="#cccccc" stroke-width="1.4" stroke-linejoin="round" stroke-linecap="round"/></svg>
<div class="a" style="left:816px;top:98px;width:1px;height:37px;background:#444444;"></div>
<svg class="a" style="left:825px;top:99px;" width="16" height="36" viewBox="0 0 16 36"><path d="M4 2 H8 M2 4 V13 Q2 14.5 3.5 14.5 H5" fill="none" stroke="#cccccc" stroke-width="1.2" stroke-linejoin="round" stroke-linecap="round"/><rect x="4" y="4" width="6" height="8" rx="1" fill="none" stroke="#cccccc" stroke-width="1.2" stroke-linejoin="round" stroke-linecap="round"/><path d="M8 10 L13.5 16 M13.5 10 L8 16" stroke="#cccccc" stroke-width="1.2"/><path d="M4 19 H8 M2 21 V30 Q2 31.5 3.5 31.5 H5" fill="none" stroke="#cccccc" stroke-width="1.2" stroke-linejoin="round" stroke-linecap="round"/><rect x="4" y="21" width="6" height="8" rx="1" fill="none" stroke="#cccccc" stroke-width="1.2" stroke-linejoin="round" stroke-linecap="round"/><path d="M8 27 L10.75 30 L13.5 27 M10.75 30 V34" stroke="#cccccc" stroke-width="1.2" fill="none"/></svg>
<div class="a" style="left:842px;top:99px;width:102px;height:36px;border:1px solid #4a4a4a;border-radius:4px"></div>
<div class="a t" style="left:847.5px;top:103.77px;font-size:11.5px;line-height:11.5px;color:#dcdcdc;font-weight:400;letter-spacing:-0.459px;">75,0 пкс</div>
<div class="a t" style="left:847.5px;top:120.77px;font-size:11.5px;line-height:11.5px;color:#dcdcdc;font-weight:400;letter-spacing:-0.459px;">75,0 пкс</div>
<svg class="a" style="left:918px;top:106px;" width="9" height="6" viewBox="0 0 9 6"><path d="M1 1 L4.5 4.5 L8 1" fill="none" stroke="#cccccc" stroke-width="1.4" stroke-linejoin="round" stroke-linecap="round"/></svg>
<svg class="a" style="left:931px;top:106px;" width="9" height="6" viewBox="0 0 9 6"><path d="M1 5 L4.5 1.5 L8 5" fill="none" stroke="#cccccc" stroke-width="1.4" stroke-linejoin="round" stroke-linecap="round"/></svg>
<svg class="a" style="left:918px;top:123px;" width="9" height="6" viewBox="0 0 9 6"><path d="M1 1 L4.5 4.5 L8 1" fill="none" stroke="#cccccc" stroke-width="1.4" stroke-linejoin="round" stroke-linecap="round"/></svg>
<svg class="a" style="left:931px;top:123px;" width="9" height="6" viewBox="0 0 9 6"><path d="M1 5 L4.5 1.5 L8 5" fill="none" stroke="#cccccc" stroke-width="1.4" stroke-linejoin="round" stroke-linecap="round"/></svg>
<div class="a" style="left:952px;top:98px;width:1px;height:37px;background:#444444;"></div>
<div class="a" style="left:960px;top:104px;width:26px;height:26px;border-radius:3px;background:#1f4d85"></div>
<svg class="a" style="left:963px;top:107px;" width="20" height="20" viewBox="0 0 20 20"><path d="M3 3 H16 V11 M3 3 V16 H10" fill="none" stroke="#dfe6ee" stroke-width="1.5"/><circle cx="3" cy="3" r="1.6" fill="#1f4d85" stroke="#dfe6ee" stroke-width="1.1"/><circle cx="16" cy="3" r="1.6" fill="#1f4d85" stroke="#dfe6ee" stroke-width="1.1"/><circle cx="3" cy="16" r="1.6" fill="#1f4d85" stroke="#dfe6ee" stroke-width="1.1"/><circle cx="9.5" cy="3" r="1.2" fill="#dfe6ee"/><path d="M12 11 L19 15 L16 16 L17.5 19 L16 19.5 L14.5 16.5 L12.5 18 Z" fill="#dfe6ee"/></svg>
<div class="a" style="left:993px;top:98px;width:1px;height:37px;background:#444444;"></div>
<svg class="a" style="left:1004px;top:107px;" width="21" height="21" viewBox="0 0 21 21"><path d="M2 6 V2 H6 M2 15 V19 H6 M19 19 H15" stroke="#555555" stroke-width="1.2" fill="none"/><rect x="5.5" y="7" width="5" height="5" rx="1" fill="none" stroke="#555555" stroke-width="1.2" stroke-linejoin="round" stroke-linecap="round"/><circle cx="10" cy="12.5" r="3.2" fill="none" stroke="#555555" stroke-width="1.2" stroke-linejoin="round" stroke-linecap="round"/><path d="M11 5 L19 11" stroke="#555555" stroke-width="1.6" stroke-dasharray="1.5 1"/></svg>
<svg class="a" style="left:1037px;top:107px;" width="21" height="21" viewBox="0 0 21 21"><path d="M2 6 V2 H6 M2 15 V19 H6" stroke="#555555" stroke-width="1.2" fill="none"/><rect x="5.5" y="7" width="5" height="5" rx="1" fill="none" stroke="#555555" stroke-width="1.2" stroke-linejoin="round" stroke-linecap="round"/><circle cx="10" cy="12.5" r="3.2" fill="none" stroke="#555555" stroke-width="1.2" stroke-linejoin="round" stroke-linecap="round"/><path d="M12 5 L14.5 7.5 L19 2.5" fill="none" stroke="#555555" stroke-width="1.2" stroke-linejoin="round" stroke-linecap="round"/><path d="M13 17 L15.5 19.5 L18 17 M15.5 12 V19.5" fill="none" stroke="#555555" stroke-width="1.2" stroke-linejoin="round" stroke-linecap="round"/></svg>
<div class="a" style="left:1067px;top:98px;width:1px;height:37px;background:#444444;"></div>
<svg class="a" style="left:1092px;top:109px;" width="15" height="15" viewBox="0 0 15 15"><path d="M7.5 0.5 V14.5 M0.5 7.5 H14.5" stroke="#e0e0e0" stroke-width="2"/></svg>
<div class="a" style="left:12px;top:145px;width:25px;height:25px;border-radius:3px;background:#1f4d85"></div>
<svg class="a" style="left:18px;top:149px;" width="14" height="16" viewBox="0 0 14 16"><path d="M1.5 1 L12.5 9.5 L7.5 10 L10.5 15 L8.5 15.8 L5.8 10.8 L1.5 14 Z" fill="#d8dde6"/></svg>
<svg class="a" style="left:31.5px;top:164px;" width="5" height="5" viewBox="0 0 5 5"><path d="M5 0 V5 H0 Z" fill="#d8dde6"/></svg>
<svg class="a" style="left:15px;top:180px;" width="20" height="20" viewBox="0 0 20 20"><path d="M2.5 16 Q4 5 15.5 2" fill="none" stroke="#d0d0d0" stroke-width="1.3" stroke-linejoin="round" stroke-linecap="round"/><circle cx="6.5" cy="5.5" r="1.9" fill="#262626" stroke="#d0d0d0" stroke-width="1.2"/><path d="M8.5 7 L17.5 13.5 L13 14 L10.5 18 Z" fill="#d0d0d0"/></svg>
<svg class="a" style="left:32px;top:196px;" width="5" height="5" viewBox="0 0 5 5"><path d="M5 0 V5 H0 Z" fill="#d0d0d0"/></svg>
<div class="a" style="left:12px;top:211px;width:25px;height:1px;background:#3c3c3c;"></div>
<svg class="a" style="left:15px;top:222px;" width="20" height="22" viewBox="0 0 20 22"><path d="M5 1.5 V15 H18.5 M1.5 5 H15 V18.5" fill="none" stroke="#d0d0d0" stroke-width="2.2"/></svg>
<svg class="a" style="left:32px;top:239px;" width="5" height="5" viewBox="0 0 5 5"><path d="M5 0 V5 H0 Z" fill="#d0d0d0"/></svg>
<svg class="a" style="left:14px;top:252px;" width="22" height="22" viewBox="0 0 22 22"><circle cx="8" cy="8" r="6" fill="none" stroke="#d0d0d0" stroke-width="1.5" stroke-linejoin="round" stroke-linecap="round"/><path d="M12.5 12.5 L18 18" stroke="#d0d0d0" stroke-width="2" stroke-linecap="round"/></svg>
<svg class="a" style="left:32px;top:271px;" width="5" height="5" viewBox="0 0 5 5"><path d="M5 0 V5 H0 Z" fill="#d0d0d0"/></svg>
<div class="a" style="left:12px;top:285px;width:25px;height:1px;background:#3c3c3c;"></div>
<svg class="a" style="left:15px;top:296px;" width="20" height="20" viewBox="0 0 20 20"><path d="M4.5 1 V8 M1 4.5 H8" stroke="#d0d0d0" stroke-width="1.3"/><path d="M3 16 Q3.5 12 4.5 15 Q5.5 18 6.5 14 Q7.5 11 8.5 15 Q9.5 18 10.5 14 Q11.5 11 12.5 15 Q13.5 17 16 13" fill="none" stroke="#d0d0d0" stroke-width="1.2" stroke-linejoin="round" stroke-linecap="round"/></svg>
<svg class="a" style="left:32px;top:312px;" width="5" height="5" viewBox="0 0 5 5"><path d="M5 0 V5 H0 Z" fill="#d0d0d0"/></svg>
<svg class="a" style="left:15px;top:328px;" width="20" height="21" viewBox="0 0 20 21"><path d="M17.5 2 L8 12" stroke="#d0d0d0" stroke-width="2.2" stroke-linecap="round"/><path d="M7 11 Q3 12 2.5 18.5 Q8.5 18 9.5 14 Z" fill="#d0d0d0"/></svg>
<svg class="a" style="left:32px;top:346px;" width="5" height="5" viewBox="0 0 5 5"><path d="M5 0 V5 H0 Z" fill="#d0d0d0"/></svg>
<div class="a" style="left:16px;top:364px;width:16px;height:16px;border:1.5px solid #d0d0d0;border-radius:1px"></div>
<svg class="a" style="left:32px;top:379px;" width="5" height="5" viewBox="0 0 5 5"><path d="M5 0 V5 H0 Z" fill="#d0d0d0"/></svg>
<div class="a" style="left:15.5px;top:396.5px;width:17px;height:17px;border:1.5px solid #d0d0d0;border-radius:50%"></div>
<svg class="a" style="left:32px;top:412px;" width="5" height="5" viewBox="0 0 5 5"><path d="M5 0 V5 H0 Z" fill="#d0d0d0"/></svg>
<svg class="a" style="left:14px;top:430px;" width="21" height="17" viewBox="0 0 21 17"><path d="M5.5 1.5 H14.5 L19 8.5 L14.5 15.5 H5.5 L1 8.5 Z" fill="none" stroke="#d0d0d0" stroke-width="1.4" stroke-linejoin="round" stroke-linecap="round"/></svg>
<svg class="a" style="left:32px;top:445px;" width="5" height="5" viewBox="0 0 5 5"><path d="M5 0 V5 H0 Z" fill="#d0d0d0"/></svg>
<div class="a" style="left:12px;top:458px;width:25px;height:1px;background:#3c3c3c;"></div>
<div class="a t" style="left:16px;top:471.07px;font-size:20px;line-height:20px;color:#d0d0d0;font-weight:400;">A</div>
<svg class="a" style="left:32px;top:485px;" width="5" height="5" viewBox="0 0 5 5"><path d="M5 0 V5 H0 Z" fill="#d0d0d0"/></svg>
<div class="a" style="left:12px;top:500px;width:25px;height:1px;background:#3c3c3c;"></div>
<svg class="a" style="left:15px;top:511px;" width="20" height="18" viewBox="0 0 20 18"><path d="M3 15.5 L16 2.5" stroke="#d0d0d0" stroke-width="1.2"/><circle cx="3" cy="15.5" r="1.2" fill="#d0d0d0"/><circle cx="16" cy="2.5" r="1.2" fill="#d0d0d0"/></svg>
<svg class="a" style="left:32px;top:526px;" width="5" height="5" viewBox="0 0 5 5"><path d="M5 0 V5 H0 Z" fill="#d0d0d0"/></svg>
<svg class="a" style="left:15px;top:544px;" width="20" height="20" viewBox="0 0 20 20"><path d="M4.5 4.5 Q9 5 10 9 Q11 13 15.5 14.5" fill="none" stroke="#d0d0d0" stroke-width="1.2" stroke-linejoin="round" stroke-linecap="round"/><rect x="1.8" y="1.8" width="5.4" height="5.4" fill="#e8792a" transform="rotate(45 4.5 4.5)"/><rect x="12.8" y="11.8" width="5.4" height="5.4" fill="#e8792a" transform="rotate(45 15.5 14.5)"/></svg>
<svg class="a" style="left:32px;top:562px;" width="5" height="5" viewBox="0 0 5 5"><path d="M5 0 V5 H0 Z" fill="#d0d0d0"/></svg>
<div class="a" style="left:12px;top:573px;width:25px;height:1px;background:#3c3c3c;"></div>
<svg class="a" style="left:15px;top:585px;" width="20" height="20" viewBox="0 0 20 20"><path d="M4 16 H15.5 Q17.5 16 17.5 14 V4" fill="none" stroke="#a8a8a8" stroke-width="1.4" stroke-linejoin="round" stroke-linecap="round"/><path d="M6 18.5 H17 Q19.5 18.5 19.5 16 V6" fill="none" stroke="#c0c0c0" stroke-width="1.2" stroke-linejoin="round" stroke-linecap="round" opacity="0.6"/><rect x="1.5" y="1.5" width="13" height="13" rx="1.5" fill="none" stroke="#d0d0d0" stroke-width="1.5" stroke-linejoin="round" stroke-linecap="round"/></svg>
<svg class="a" style="left:32px;top:600px;" width="5" height="5" viewBox="0 0 5 5"><path d="M5 0 V5 H0 Z" fill="#d0d0d0"/></svg>
<svg class="a" style="left:16px;top:619px;" width="17" height="17" viewBox="0 0 17 17"><rect width="17" height="17" fill="#dedede"/><rect x="0.0" y="3.4" width="3.4" height="3.4" fill="#1a1a1a"/><rect x="0.0" y="10.2" width="3.4" height="3.4" fill="#1a1a1a"/><rect x="3.4" y="0.0" width="3.4" height="3.4" fill="#1a1a1a"/><rect x="3.4" y="6.8" width="3.4" height="3.4" fill="#1a1a1a"/><rect x="3.4" y="13.6" width="3.4" height="3.4" fill="#1a1a1a"/><rect x="6.8" y="3.4" width="3.4" height="3.4" fill="#1a1a1a"/><rect x="6.8" y="10.2" width="3.4" height="3.4" fill="#1a1a1a"/><rect x="10.2" y="0.0" width="3.4" height="3.4" fill="#1a1a1a"/><rect x="10.2" y="6.8" width="3.4" height="3.4" fill="#1a1a1a"/><rect x="10.2" y="13.6" width="3.4" height="3.4" fill="#1a1a1a"/><rect x="13.6" y="3.4" width="3.4" height="3.4" fill="#1a1a1a"/><rect x="13.6" y="10.2" width="3.4" height="3.4" fill="#1a1a1a"/></svg>
<div class="a" style="left:12px;top:646px;width:25px;height:1px;background:#3c3c3c;"></div>
<svg class="a" style="left:17px;top:672px;" width="15" height="15" viewBox="0 0 15 15"><path d="M7.5 0.5 V14.5 M0.5 7.5 H14.5" stroke="#d0d0d0" stroke-width="2.4"/></svg>
<svg class="a" style="left:17px;top:719px;" width="16" height="12" viewBox="0 0 16 12"><path d="M2 2 L6 6 L2 10 M8 2 L12 6 L8 10" fill="none" stroke="#d0d0d0" stroke-width="1.5" stroke-linejoin="round" stroke-linecap="round"/></svg>
<div class="a" style="left:46px;top:144px;width:151px;height:26px;border-radius:4px 4px 0 0;background:#3a3a3a"></div>
<svg class="a" style="left:52px;top:147px;" width="18" height="19" viewBox="0 0 18 19"><path d="M2 9 L9 2 L16 9 M4 7.5 V17 H14 V7.5 M7 17 V11.5 H11 V17" fill="none" stroke="#d0d0d0" stroke-width="1.4" stroke-linejoin="round" stroke-linecap="round"/></svg>
<div class="a t" style="left:77px;top:151.77px;font-size:11.5px;line-height:11.5px;color:#d8d8d8;font-weight:400;letter-spacing:-0.381px;">Экран приветствия</div>
<div class="a" style="left:202px;top:144px;width:102px;height:26px;border-radius:4px 4px 0 0;background:#1f4d85"></div>
<div class="a t" style="left:205.5px;top:151.77px;font-size:11.5px;line-height:11.5px;color:#c8d8ea;font-weight:400;letter-spacing:-0.453px;">Безымянный-2</div>
<div class="a" style="left:308px;top:144px;width:26px;height:26px;border-radius:4px 4px 0 0;background:#3a3a3a"></div>
<svg class="a" style="left:314px;top:150px;" width="14" height="14" viewBox="0 0 14 14"><path d="M7 0.5 V13.5 M0.5 7 H13.5" stroke="#e0e0e0" stroke-width="2.2"/></svg>
<svg class="a" style="left:43px;top:172px;" width="14" height="13" viewBox="0 0 14 13"><circle cx="3" cy="3" r="1.6" fill="#bbb"/><path d="M3 5 V12 M5 3 H12" stroke="#bbb" stroke-width="1" stroke-dasharray="1 1"/><path d="M4.5 4.5 L10 10 M10 6.5 V10 H6.5" stroke="#ccc" stroke-width="1.1" fill="none"/></svg>
<svg class="a" style="left:0px;top:170px;" width="910" height="16" viewBox="0 0 910 16"><rect x="73.5" y="12" width="1" height="4" fill="#7a7a7a"/><rect x="90.8" y="12" width="1" height="4" fill="#7a7a7a"/><rect x="108.0" y="12" width="1" height="4" fill="#7a7a7a"/><rect x="125.3" y="12" width="1" height="4" fill="#7a7a7a"/><rect x="142.5" y="0" width="1" height="16" fill="#555"/><rect x="159.7" y="12" width="1" height="4" fill="#7a7a7a"/><rect x="177.0" y="12" width="1" height="4" fill="#7a7a7a"/><rect x="194.2" y="12" width="1" height="4" fill="#7a7a7a"/><rect x="211.5" y="12" width="1" height="4" fill="#7a7a7a"/><rect x="228.7" y="12" width="1" height="4" fill="#7a7a7a"/><rect x="245.9" y="12" width="1" height="4" fill="#7a7a7a"/><rect x="263.2" y="12" width="1" height="4" fill="#7a7a7a"/><rect x="280.4" y="12" width="1" height="4" fill="#7a7a7a"/><rect x="297.7" y="12" width="1" height="4" fill="#7a7a7a"/><rect x="314.9" y="0" width="1" height="16" fill="#555"/><rect x="332.1" y="12" width="1" height="4" fill="#7a7a7a"/><rect x="349.4" y="12" width="1" height="4" fill="#7a7a7a"/><rect x="366.6" y="12" width="1" height="4" fill="#7a7a7a"/><rect x="383.9" y="12" width="1" height="4" fill="#7a7a7a"/><rect x="401.1" y="12" width="1" height="4" fill="#7a7a7a"/><rect x="418.3" y="12" width="1" height="4" fill="#7a7a7a"/><rect x="435.6" y="12" width="1" height="4" fill="#7a7a7a"/><rect x="452.8" y="12" width="1" height="4" fill="#7a7a7a"/><rect x="470.1" y="12" width="1" height="4" fill="#7a7a7a"/><rect x="487.3" y="0" width="1" height="16" fill="#555"/><rect x="504.5" y="12" width="1" height="4" fill="#7a7a7a"/><rect x="521.8" y="12" width="1" height="4" fill="#7a7a7a"/><rect x="539.0" y="12" width="1" height="4" fill="#7a7a7a"/><rect x="556.3" y="12" width="1" height="4" fill="#7a7a7a"/><rect x="573.5" y="12" width="1" height="4" fill="#7a7a7a"/><rect x="590.7" y="12" width="1" height="4" fill="#7a7a7a"/><rect x="608.0" y="12" width="1" height="4" fill="#7a7a7a"/><rect x="625.2" y="12" width="1" height="4" fill="#7a7a7a"/><rect x="642.5" y="12" width="1" height="4" fill="#7a7a7a"/><rect x="659.7" y="0" width="1" height="16" fill="#555"/><rect x="676.9" y="12" width="1" height="4" fill="#7a7a7a"/><rect x="694.2" y="12" width="1" height="4" fill="#7a7a7a"/><rect x="711.4" y="12" width="1" height="4" fill="#7a7a7a"/><rect x="728.7" y="12" width="1" height="4" fill="#7a7a7a"/><rect x="745.9" y="12" width="1" height="4" fill="#7a7a7a"/><rect x="763.1" y="12" width="1" height="4" fill="#7a7a7a"/><rect x="780.4" y="12" width="1" height="4" fill="#7a7a7a"/><rect x="797.6" y="12" width="1" height="4" fill="#7a7a7a"/><rect x="814.9" y="12" width="1" height="4" fill="#7a7a7a"/><rect x="832.1" y="0" width="1" height="16" fill="#555"/><rect x="849.3" y="12" width="1" height="4" fill="#7a7a7a"/><rect x="866.6" y="12" width="1" height="4" fill="#7a7a7a"/><rect x="883.8" y="12" width="1" height="4" fill="#7a7a7a"/><rect x="901.1" y="12" width="1" height="4" fill="#7a7a7a"/></svg>
<div class="a t" style="left:146.5px;top:172.20px;font-size:9.8px;line-height:9.8px;color:#d0d0d0;font-weight:400;">0</div>
<div class="a t" style="left:318px;top:172.20px;font-size:9.8px;line-height:9.8px;color:#d0d0d0;font-weight:400;">500</div>
<div class="a t" style="left:490.5px;top:172.20px;font-size:9.8px;line-height:9.8px;color:#d0d0d0;font-weight:400;">1000</div>
<div class="a t" style="left:663.5px;top:172.20px;font-size:9.8px;line-height:9.8px;color:#d0d0d0;font-weight:400;">1500</div>
<div class="a t" style="left:836px;top:172.20px;font-size:9.8px;line-height:9.8px;color:#d0d0d0;font-weight:400;">2000</div>
<div class="a" style="left:862px;top:171px;width:46px;height:11px;background:#1e1e1e;"></div>
<div class="a t" style="left:864.5px;top:172.20px;font-size:9.8px;line-height:9.8px;color:#d0d0d0;font-weight:400;letter-spacing:-0.192px;">пикселей</div>
<svg class="a" style="left:201px;top:170px;" width="2" height="16" viewBox="0 0 2 16"><path d="M1 0 V16" stroke="#d8d8d8" stroke-width="1.5" stroke-dasharray="2.5 1.8"/></svg>
<svg class="a" style="left:42px;top:186px;" width="16" height="500" viewBox="0 0 16 500"><rect x="12" y="485.3" width="4" height="1" fill="#7a7a7a"/><rect x="12" y="468.1" width="4" height="1" fill="#7a7a7a"/><rect x="12" y="450.8" width="4" height="1" fill="#7a7a7a"/><rect x="12" y="433.6" width="4" height="1" fill="#7a7a7a"/><rect x="12" y="416.3" width="4" height="1" fill="#7a7a7a"/><rect x="0" y="399.1" width="16" height="1" fill="#555"/><rect x="12" y="381.9" width="4" height="1" fill="#7a7a7a"/><rect x="12" y="364.6" width="4" height="1" fill="#7a7a7a"/><rect x="12" y="347.4" width="4" height="1" fill="#7a7a7a"/><rect x="12" y="330.1" width="4" height="1" fill="#7a7a7a"/><rect x="12" y="312.9" width="4" height="1" fill="#7a7a7a"/><rect x="12" y="295.7" width="4" height="1" fill="#7a7a7a"/><rect x="12" y="278.4" width="4" height="1" fill="#7a7a7a"/><rect x="12" y="261.2" width="4" height="1" fill="#7a7a7a"/><rect x="12" y="243.9" width="4" height="1" fill="#7a7a7a"/><rect x="0" y="226.7" width="16" height="1" fill="#555"/><rect x="12" y="209.5" width="4" height="1" fill="#7a7a7a"/><rect x="12" y="192.2" width="4" height="1" fill="#7a7a7a"/><rect x="12" y="175.0" width="4" height="1" fill="#7a7a7a"/><rect x="12" y="157.7" width="4" height="1" fill="#7a7a7a"/><rect x="12" y="140.5" width="4" height="1" fill="#7a7a7a"/><rect x="12" y="123.3" width="4" height="1" fill="#7a7a7a"/><rect x="12" y="106.0" width="4" height="1" fill="#7a7a7a"/><rect x="12" y="88.8" width="4" height="1" fill="#7a7a7a"/><rect x="12" y="71.5" width="4" height="1" fill="#7a7a7a"/><rect x="0" y="54.3" width="16" height="1" fill="#555"/><rect x="12" y="37.1" width="4" height="1" fill="#7a7a7a"/><rect x="12" y="19.8" width="4" height="1" fill="#7a7a7a"/><rect x="12" y="2.6" width="4" height="1" fill="#7a7a7a"/></svg>
<div class="a t" style="left:44px;top:235.8px;font-size:10px;line-height:10px;color:#d0d0d0;transform-origin:0 0;transform:rotate(-90deg)">1000</div>
<div class="a t" style="left:44px;top:408.20000000000005px;font-size:10px;line-height:10px;color:#d0d0d0;transform-origin:0 0;transform:rotate(-90deg)">500</div>
<div class="a t" style="left:44px;top:580.6px;font-size:10px;line-height:10px;color:#d0d0d0;transform-origin:0 0;transform:rotate(-90deg)">0</div>
<div class="a t" style="left:44.5px;top:682px;font-size:9px;line-height:9px;color:#d0d0d0;transform-origin:0 0;transform:rotate(-90deg)">пикселей</div>
<svg class="a" style="left:42px;top:206px;" width="16" height="2" viewBox="0 0 16 2"><path d="M0 1 H16" stroke="#d8d8d8" stroke-width="1.5" stroke-dasharray="2.5 1.8"/></svg>
<div class="a" style="left:132px;top:258px;width:100px;height:17px;border-radius:8.5px;background:#4d4d4d"></div>
<div class="a t" style="left:143px;top:260.50px;font-size:13px;line-height:13px;color:#2a86c4;font-weight:400;">Страница 1</div>
<svg class="a" style="left:143px;top:275px;" width="311" height="309" viewBox="0 0 311 309"><defs><linearGradient id="fr" x1="0" y1="0" x2="0" y2="1"><stop offset="0" stop-color="#f0fcfb"/><stop offset="1" stop-color="#c9efec"/></linearGradient><linearGradient id="lf" x1="0" y1="0" x2="1" y2="1"><stop offset="0" stop-color="#a8d8b8"/><stop offset="0.6" stop-color="#c8c8d8"/><stop offset="1" stop-color="#dcc8ec"/></linearGradient><linearGradient id="lf2" x1="0" y1="0" x2="1" y2="1"><stop offset="0" stop-color="#f0f0c0"/><stop offset="0.6" stop-color="#e8d8e0"/><stop offset="1" stop-color="#dcc8ec"/></linearGradient><radialGradient id="gf" gradientUnits="userSpaceOnUse" cx="75" cy="225" r="105"><stop offset="0" stop-color="#ffffff" stop-opacity="1"/><stop offset="0.55" stop-color="#ffffff" stop-opacity="0.6"/><stop offset="1" stop-color="#ffffff" stop-opacity="0"/></radialGradient><pattern id="gp" width="19.6" height="19.6" patternUnits="userSpaceOnUse" x="0.7" y="1.2"><path d="M0 0 V19.6 M0 0 H19.6" stroke="#ffffff" stroke-width="1.4" fill="none"/></pattern><mask id="gm"><rect x="0" y="0" width="311" height="309" fill="url(#gf)"/></mask></defs><rect x="0" y="0" width="311" height="309" fill="#000"/><rect x="3" y="3" width="304" height="302" fill="#b6f0ec"/><rect x="3" y="150" width="200" height="150" fill="url(#gp)" mask="url(#gm)"/><path d="M42.5 56 L72 58 L69 103 Q51 85 42.5 56 Z" fill="#dcc8e8" stroke="#4646f0" stroke-width="3" stroke-linejoin="round"/><path d="M45 58 L69 77 M53 80 L69 82" stroke="#2a3a6a" stroke-width="1" fill="none"/><path d="M41.69999999999999 89.5 Q42.68999999999999 94.01 47.19999999999999 95 Q42.68999999999999 95.99 41.69999999999999 100.5 Q40.70999999999999 95.99 36.19999999999999 95 Q40.70999999999999 94.01 41.69999999999999 89.5 Z" fill="#ffffff"/><path d="M156.6,209.0 C156.0,235.0 165.0,265.0 192.6,288.7 C199.0,265.0 200.0,240.0 193.0,209.0 Z" fill="url(#lf)" stroke="#4646f0" stroke-width="3.2" stroke-linejoin="round"/><path d="M173.0,209.0 C175.0,240.0 183.0,270.0 192.6,288.7" stroke="#2c3a62" stroke-width="1" fill="none"/><path d="M161.0,211.0 C163.0,230.0 169.0,245.0 179.0,255.0" stroke="#2c3a62" stroke-width="1" fill="none"/><path d="M183.0,211.0 C184.0,225.0 187.0,240.0 190.0,250.0" stroke="#2c3a62" stroke-width="1" fill="none"/><path d="M166.0,230.0 C172.0,245.0 179.0,260.0 187.0,275.0" stroke="#2c3a62" stroke-width="1" fill="none"/><path d="M188.0,230.0 C190.0,245.0 192.0,265.0 193.0,280.0" stroke="#2c3a62" stroke-width="1" fill="none"/><path d="M179.7,209.0 C185.0,235.0 205.0,263.0 237.5,276.0 C239.0,253.0 234.0,230.0 223.0,209.0 Z" fill="url(#lf2)" stroke="#4646f0" stroke-width="3.2" stroke-linejoin="round"/><path d="M199.0,209.0 C205.0,235.0 219.0,260.0 237.5,276.0" stroke="#2c3a62" stroke-width="1" fill="none"/><path d="M187.0,215.0 C191.0,230.0 197.0,240.0 207.0,247.0" stroke="#2c3a62" stroke-width="1" fill="none"/><path d="M212.0,211.0 C217.0,225.0 222.0,237.0 229.0,247.0" stroke="#2c3a62" stroke-width="1" fill="none"/><path d="M192.0,230.0 C202.0,245.0 215.0,260.0 229.0,270.0" stroke="#2c3a62" stroke-width="1" fill="none"/><path d="M219.0,230.0 C225.0,245.0 231.0,260.0 235.0,270.0" stroke="#2c3a62" stroke-width="1" fill="none"/><path d="M206.0,209.0 C217.0,230.0 242.0,249.0 281.1,255.3 C274.0,237.0 263.0,219.0 253.5,209.0 Z" fill="url(#lf)" stroke="#4646f0" stroke-width="3.2" stroke-linejoin="round"/><path d="M229.0,209.0 C242.0,230.0 262.0,245.0 281.1,255.3" stroke="#2c3a62" stroke-width="1" fill="none"/><path d="M213.0,215.0 C222.0,225.0 232.0,233.0 245.0,237.0" stroke="#2c3a62" stroke-width="1" fill="none"/><path d="M242.0,211.0 C252.0,220.0 262.0,230.0 269.0,240.0" stroke="#2c3a62" stroke-width="1" fill="none"/><path d="M225.0,225.0 C237.0,237.0 252.0,245.0 269.0,251.0" stroke="#2c3a62" stroke-width="1" fill="none"/><path d="M252.0,225.0 C262.0,235.0 269.0,243.0 275.0,250.0" stroke="#2c3a62" stroke-width="1" fill="none"/><polygon points="161.3,225.0 157.0,229.6 160.0,235.1 154.6,238.4 156.1,244.5 150.1,246.3 149.9,252.6 143.6,252.8 141.8,258.8 135.7,257.3 132.4,262.7 126.9,259.7 122.3,264.0 117.7,259.7 112.2,262.7 108.9,257.3 102.8,258.8 101.0,252.8 94.7,252.6 94.5,246.3 88.5,244.5 90.0,238.4 84.6,235.1 87.6,229.6 83.3,225.0 87.6,220.4 84.6,214.9 90.0,211.6 88.5,205.5 94.5,203.7 94.7,197.4 101.0,197.2 102.8,191.2 108.9,192.7 112.2,187.3 117.7,190.3 122.3,186.0 126.9,190.3 132.4,187.3 135.7,192.7 141.8,191.2 143.6,197.2 149.9,197.4 150.1,203.7 156.1,205.5 154.6,211.6 160.0,214.9 157.0,220.4" fill="#f07c9c" stroke="#4646f0" stroke-width="3.5" stroke-linejoin="round"/><ellipse cx="122.30000000000001" cy="201" rx="5.5" ry="12" fill="#f8b4c6" stroke="#e8608a" stroke-width="0.8" transform="rotate(0.0 122.30000000000001 225)"/><ellipse cx="122.30000000000001" cy="201" rx="5.5" ry="12" fill="#f8b4c6" stroke="#e8608a" stroke-width="0.8" transform="rotate(22.5 122.30000000000001 225)"/><ellipse cx="122.30000000000001" cy="201" rx="5.5" ry="12" fill="#f8b4c6" stroke="#e8608a" stroke-width="0.8" transform="rotate(45.0 122.30000000000001 225)"/><ellipse cx="122.30000000000001" cy="201" rx="5.5" ry="12" fill="#f8b4c6" stroke="#e8608a" stroke-width="0.8" transform="rotate(67.5 122.30000000000001 225)"/><ellipse cx="122.30000000000001" cy="201" rx="5.5" ry="12" fill="#f8b4c6" stroke="#e8608a" stroke-width="0.8" transform="rotate(90.0 122.30000000000001 225)"/><ellipse cx="122.30000000000001" cy="201" rx="5.5" ry="12" fill="#f8b4c6" stroke="#e8608a" stroke-width="0.8" transform="rotate(112.5 122.30000000000001 225)"/><ellipse cx="122.30000000000001" cy="201" rx="5.5" ry="12" fill="#f8b4c6" stroke="#e8608a" stroke-width="0.8" transform="rotate(135.0 122.30000000000001 225)"/><ellipse cx="122.30000000000001" cy="201" rx="5.5" ry="12" fill="#f8b4c6" stroke="#e8608a" stroke-width="0.8" transform="rotate(157.5 122.30000000000001 225)"/><ellipse cx="122.30000000000001" cy="201" rx="5.5" ry="12" fill="#f8b4c6" stroke="#e8608a" stroke-width="0.8" transform="rotate(180.0 122.30000000000001 225)"/><ellipse cx="122.30000000000001" cy="201" rx="5.5" ry="12" fill="#f8b4c6" stroke="#e8608a" stroke-width="0.8" transform="rotate(202.5 122.30000000000001 225)"/><ellipse cx="122.30000000000001" cy="201" rx="5.5" ry="12" fill="#f8b4c6" stroke="#e8608a" stroke-width="0.8" transform="rotate(225.0 122.30000000000001 225)"/><ellipse cx="122.30000000000001" cy="201" rx="5.5" ry="12" fill="#f8b4c6" stroke="#e8608a" stroke-width="0.8" transform="rotate(247.5 122.30000000000001 225)"/><ellipse cx="122.30000000000001" cy="201" rx="5.5" ry="12" fill="#f8b4c6" stroke="#e8608a" stroke-width="0.8" transform="rotate(270.0 122.30000000000001 225)"/><ellipse cx="122.30000000000001" cy="201" rx="5.5" ry="12" fill="#f8b4c6" stroke="#e8608a" stroke-width="0.8" transform="rotate(292.5 122.30000000000001 225)"/><ellipse cx="122.30000000000001" cy="201" rx="5.5" ry="12" fill="#f8b4c6" stroke="#e8608a" stroke-width="0.8" transform="rotate(315.0 122.30000000000001 225)"/><ellipse cx="122.30000000000001" cy="201" rx="5.5" ry="12" fill="#f8b4c6" stroke="#e8608a" stroke-width="0.8" transform="rotate(337.5 122.30000000000001 225)"/><circle cx="122.30000000000001" cy="225" r="16" fill="#d8a868" stroke="#c08848" stroke-width="1"/><circle cx="122.30000000000001" cy="225" r="8" fill="#e4c888" stroke="#c8a060" stroke-width="1"/><rect x="55" y="112" width="213" height="97" fill="#4646f0"/><rect x="49" y="106.5" width="213" height="97" fill="url(#fr)" stroke="#4646f0" stroke-width="4"/><circle cx="111" cy="171" r="19" fill="#111"/><circle cx="201" cy="171" r="19" fill="#111"/><path d="M282 208.25 Q282.99 212.76 287.5 213.75 Q282.99 214.74 282 219.25 Q281.01 214.74 276.5 213.75 Q281.01 212.76 282 208.25 Z" fill="#ffffff"/><path d="M67 216.5 Q67.99 221.01 72.5 222 Q67.99 222.99 67 227.5 Q66.01 222.99 61.5 222 Q66.01 221.01 67 216.5 Z" fill="#ffffff"/><path d="M154.5 261 Q155.4 265.1 159.5 266 Q155.4 266.9 154.5 271 Q153.6 266.9 149.5 266 Q153.6 265.1 154.5 261 Z" fill="#ffffff"/><path d="M139.5 266.5 Q140.31 270.19 144.0 271 Q140.31 271.81 139.5 275.5 Q138.69 271.81 135.0 271 Q138.69 270.19 139.5 266.5 Z" fill="#ffffff"/><path d="M255 263.5 Q255.81 267.19 259.5 268 Q255.81 268.81 255 272.5 Q254.19 268.81 250.5 268 Q254.19 267.19 255 263.5 Z" fill="#ffffff"/></svg>
<div class="a" style="left:186px;top:678px;width:584px;height:2px;background:#a8a8a8;"></div>
<svg class="a" style="left:892px;top:671px;" width="16" height="16" viewBox="0 0 16 16"><circle cx="6.5" cy="6.5" r="5.5" fill="none" stroke="#cfcfcf" stroke-width="1.2" stroke-linejoin="round" stroke-linecap="round"/><path d="M10.5 10.5 L14.5 14.5" stroke="#cfcfcf" stroke-width="2" stroke-linecap="round"/><path d="M6.5 3.2 V9.8 M3.2 6.5 H9.8" stroke="#cfcfcf" stroke-width="0.9"/><circle cx="6.5" cy="6.5" r="1.3" fill="#cfcfcf"/></svg>
<svg class="a" style="left:47px;top:692px;" width="16" height="16" viewBox="0 0 16 16"><circle cx="8" cy="8" r="6.7" fill="none" stroke="#d0d0d0" stroke-width="1.3" stroke-linejoin="round" stroke-linecap="round"/><path d="M8 4.3 V11.7 M4.3 8 H11.7" stroke="#d0d0d0" stroke-width="1.8"/></svg>
<svg class="a" style="left:72px;top:692px;" width="14" height="16" viewBox="0 0 14 16"><rect x="1" y="2" width="1.6" height="12" fill="#5a5a5a"/><path d="M13 2 V14 L4 8 Z" fill="#5a5a5a"/></svg>
<svg class="a" style="left:98px;top:692px;" width="12" height="16" viewBox="0 0 12 16"><path d="M10.5 2 V14 L2 8 Z" fill="#5a5a5a"/></svg>
<div class="a t" style="left:122px;top:694.27px;font-size:11.5px;line-height:11.5px;color:#d8d8d8;font-weight:400;">1</div>
<div class="a t" style="left:135px;top:694.27px;font-size:11.5px;line-height:11.5px;color:#d8d8d8;font-weight:400;">из</div>
<div class="a t" style="left:153px;top:694.27px;font-size:11.5px;line-height:11.5px;color:#d8d8d8;font-weight:400;">3</div>
<svg class="a" style="left:173px;top:692px;" width="12" height="16" viewBox="0 0 12 16"><path d="M1.5 2 V14 L10 8 Z" fill="#d0d0d0"/></svg>
<svg class="a" style="left:196px;top:692px;" width="14" height="16" viewBox="0 0 14 16"><path d="M1 2 V14 L9.5 8 Z" fill="#d0d0d0"/><rect x="11" y="2" width="1.6" height="12" fill="#d0d0d0"/></svg>
<svg class="a" style="left:220px;top:692px;" width="16" height="16" viewBox="0 0 16 16"><circle cx="8" cy="8" r="6.7" fill="none" stroke="#d0d0d0" stroke-width="1.3" stroke-linejoin="round" stroke-linecap="round"/><path d="M8 4.3 V11.7 M4.3 8 H11.7" stroke="#d0d0d0" stroke-width="1.8"/></svg>
<div class="a" style="left:240px;top:687px;width:107px;height:23px;border-radius:0 0 5px 5px;background:#1f4d85"></div>
<div class="a t" style="left:263px;top:693.27px;font-size:11.5px;line-height:11.5px;color:#c8d8ea;font-weight:400;letter-spacing:-0.301px;">Страница 1</div>
<div class="a" style="left:348px;top:687px;width:108px;height:23px;border-radius:0 0 5px 5px;background:#383838"></div>
<div class="a t" style="left:372px;top:693.27px;font-size:11.5px;line-height:11.5px;color:#d0d0d0;font-weight:400;letter-spacing:-0.301px;">Страница 2</div>
<div class="a" style="left:457px;top:687px;width:108px;height:23px;border-radius:0 0 5px 5px;background:#383838"></div>
<div class="a t" style="left:480.5px;top:693.27px;font-size:11.5px;line-height:11.5px;color:#d0d0d0;font-weight:400;letter-spacing:-0.301px;">Страница 3</div>
<svg class="a" style="left:43px;top:715px;" width="5" height="20" viewBox="0 0 5 20"><rect x="0.0" y="0.0" width="1.5" height="1.5" fill="#777"/><rect x="0.0" y="3.0" width="1.5" height="1.5" fill="#777"/><rect x="0.0" y="6.0" width="1.5" height="1.5" fill="#777"/><rect x="0.0" y="9.0" width="1.5" height="1.5" fill="#777"/><rect x="0.0" y="12.0" width="1.5" height="1.5" fill="#777"/><rect x="0.0" y="15.0" width="1.5" height="1.5" fill="#777"/><rect x="0.0" y="18.0" width="1.5" height="1.5" fill="#777"/><rect x="1.5" y="1.5" width="1.5" height="1.5" fill="#777"/><rect x="1.5" y="4.5" width="1.5" height="1.5" fill="#777"/><rect x="1.5" y="7.5" width="1.5" height="1.5" fill="#777"/><rect x="1.5" y="10.5" width="1.5" height="1.5" fill="#777"/><rect x="1.5" y="13.5" width="1.5" height="1.5" fill="#777"/><rect x="1.5" y="16.5" width="1.5" height="1.5" fill="#777"/><rect x="3.0" y="0.0" width="1.5" height="1.5" fill="#777"/><rect x="3.0" y="3.0" width="1.5" height="1.5" fill="#777"/><rect x="3.0" y="6.0" width="1.5" height="1.5" fill="#777"/><rect x="3.0" y="9.0" width="1.5" height="1.5" fill="#777"/><rect x="3.0" y="12.0" width="1.5" height="1.5" fill="#777"/><rect x="3.0" y="15.0" width="1.5" height="1.5" fill="#777"/><rect x="3.0" y="18.0" width="1.5" height="1.5" fill="#777"/></svg>
<svg class="a" style="left:59px;top:719px;" width="8" height="12" viewBox="0 0 8 12"><path d="M2 1.5 L6 6 L2 10.5" fill="none" stroke="#d0d0d0" stroke-width="1.5" stroke-linejoin="round" stroke-linecap="round"/></svg>
<svg class="a" style="left:75px;top:716px;" width="17" height="18" viewBox="0 0 17 18"><path d="M11 7 L2.8 15.2" stroke="#dcdce6" stroke-width="3.4" stroke-linecap="round"/><path d="M10.5 7.5 L3.5 14.5" stroke="#1e1e1e" stroke-width="1.4"/><path d="M7.3 10.7 L3.6 14.4" stroke="#e8701a" stroke-width="2.2"/><path d="M8.8 4.2 L13.8 9.2" stroke="#dcdce6" stroke-width="1.8" stroke-linecap="round"/><circle cx="13" cy="5" r="2.9" fill="#dcdce6"/></svg>
<svg class="a" style="left:96px;top:719px;" width="10" height="12" viewBox="0 0 10 12"><path d="M8.5 1.5 L3 6 L8.5 10.5" fill="none" stroke="#a8a49c" stroke-width="2.2"/></svg>
<div class="a" style="left:110px;top:717px;width:236px;height:17px;border-radius:3px;overflow:hidden;display:flex"><div style="width:17px;height:17px;background:#fff;position:relative"><svg width="17" height="17" style="position:absolute;left:0;top:0"><path d="M2 15 L15 2" stroke="#e88aa0" stroke-width="1"/></svg></div><div style="width:17px;height:17px;background:#000000"></div><div style="width:17px;height:17px;background:#ffffff"></div><div style="width:17px;height:17px;background:#dcaa78"></div><div style="width:17px;height:17px;background:#d09a58"></div><div style="width:17px;height:17px;background:#e6cc96"></div><div style="width:17px;height:17px;background:#f2f0c0"></div><div style="width:17px;height:17px;background:#aad4b4"></div><div style="width:17px;height:17px;background:#d2f6f2"></div><div style="width:17px;height:17px;background:#aaeee6"></div><div style="width:17px;height:17px;background:#9aa6ee"></div><div style="width:17px;height:17px;background:#dcc0e8"></div><div style="width:17px;height:17px;background:#e2c8ee"></div><div style="width:15px;height:17px;background:#f06c8c"></div></div>
<svg class="a" style="left:866px;top:719px;" width="9" height="12" viewBox="0 0 9 12"><path d="M2 1.5 L7 6 L2 10.5" fill="none" stroke="#888" stroke-width="2"/></svg>
<svg class="a" style="left:883px;top:720px;" width="13" height="10" viewBox="0 0 13 10"><path d="M1.5 1 L5.5 5 L1.5 9 M7 1 L11 5 L7 9" fill="none" stroke="#d0d0d0" stroke-width="1.4" stroke-linejoin="round" stroke-linecap="round"/></svg>
<svg class="a" style="left:15px;top:745px;" width="22" height="22" viewBox="0 0 22 22"><polygon points="9.50,1.00 11.16,1.16 11.91,3.69 12.99,4.27 15.51,3.49 16.57,4.78 15.31,7.09 15.67,8.27 18.00,9.50 17.84,11.16 15.31,11.91 14.73,12.99 15.51,15.51 14.22,16.57 11.91,15.31 10.73,15.67 9.50,18.00 7.84,17.84 7.09,15.31 6.01,14.73 3.49,15.51 2.43,14.22 3.69,11.91 3.33,10.73 1.00,9.50 1.16,7.84 3.69,7.09 4.27,6.01 3.49,3.49 4.78,2.43 7.09,3.69 8.27,3.33" fill="#d8d8d8" stroke="#d8d8d8" stroke-width="0.8" stroke-linejoin="round"/><circle cx="9.5" cy="9.5" r="3.23" fill="#262626"/><path d="M21 16 V21 H16 Z" fill="#d8d8d8"/></svg>
<div class="a t" style="left:45px;top:750.19px;font-size:11px;line-height:11px;color:#d8d8d8;font-weight:400;">Советы по инструментам</div>
<svg class="a" style="left:788px;top:746px;" width="18" height="18" viewBox="0 0 18 18"><path d="M2.5 9 L8.5 3 L14.5 9 L8.5 15 Z" fill="none" stroke="#d0d0d0" stroke-width="1.5" stroke-linejoin="round"/><path d="M4.5 9.5 H12.5 L8.5 13.5 Z" fill="#f0604a"/><path d="M6 1.5 L8.5 4" stroke="#d0d0d0" stroke-width="1.5"/><path d="M15.5 12 Q18 15.5 15.5 17 Q13 15.5 15.5 12 Z" fill="#f0604a"/></svg>
<div class="a" style="left:811px;top:744px;width:22px;height:22px;background:#fff;border:1px solid #111;border-radius:3px;overflow:hidden"><svg width="20" height="20" style="position:absolute;left:0;top:0"><path d="M0 20 L20 0" stroke="#e8404a" stroke-width="1.5"/></svg></div>
<div class="a t" style="left:838px;top:750.69px;font-size:11px;line-height:11px;color:#d8d8d8;font-weight:400;">Нет</div>
<svg class="a" style="left:1000px;top:746px;" width="15" height="19" viewBox="0 0 15 19"><path d="M7.5 1.5 L12.5 10.5 L10.5 13.5 H4.5 L2.5 10.5 Z" fill="none" stroke="#d0d0d0" stroke-width="1.3" stroke-linejoin="round"/><path d="M7.5 2 V8" stroke="#d0d0d0" stroke-width="1"/><circle cx="7.5" cy="9.3" r="1.4" fill="none" stroke="#d0d0d0" stroke-width="1"/><rect x="4" y="14.8" width="7" height="2.4" rx="0.5" fill="#d0d0d0"/></svg>
<div class="a" style="left:1023px;top:744px;width:21px;height:22px;background:#000;border-radius:3px"></div>
<div class="a t" style="left:1050px;top:750.69px;font-size:11px;line-height:11px;color:#d8d8d8;font-weight:400;letter-spacing:-0.334px;">R:0 G:0 B:0 (#000000)</div>
<div class="a t" style="left:1161px;top:750.69px;font-size:11px;line-height:11px;color:#d8d8d8;font-weight:400;letter-spacing:-0.096px;">2,00...</div>
<div class="a" style="left:1236px;top:742px;width:1px;height:26px;background:#444;"></div>
<svg class="a" style="left:1246px;top:745px;" width="20" height="20" viewBox="0 0 20 20"><rect x="1" y="1" width="18" height="14" rx="1.5" fill="#cfcfcf"/><rect x="2.5" y="2.5" width="15" height="5.5" fill="#e86a5a"/><rect x="2.5" y="8" width="15" height="5.5" fill="#38a8e8"/><circle cx="10" cy="8" r="2.8" fill="#cfcfcf" stroke="#444" stroke-width="0.8"/><circle cx="10" cy="8" r="1" fill="#444"/><rect x="5" y="17" width="10" height="1.8" fill="#cfcfcf"/></svg>
<div class="a t" style="left:919px;top:150.27px;font-size:11.5px;line-height:11.5px;color:#e8e8e8;font-weight:700;letter-spacing:-0.370px;">Обучения</div>
<svg class="a" style="left:1200px;top:149px;" width="14" height="12" viewBox="0 0 14 12"><path d="M1 1 L6.5 6 L1 11 Z M7 1 L12.5 6 L7 11 Z" fill="#d0d0d0"/></svg>
<svg class="a" style="left:1226px;top:148px;" width="12" height="12" viewBox="0 0 12 12"><path d="M1 1 L11 11 M11 1 L1 11" stroke="#d8d8d8" stroke-width="1.6"/></svg>
<div class="a" style="left:915px;top:175px;width:25px;height:25px;border-radius:3px;background:#1f4d85"></div>
<svg class="a" style="left:918px;top:178px;" width="20" height="20" viewBox="0 0 20 20"><path d="M2 5 L10 11.5 L6.5 12 L8.5 16.5 L7 17.2 L5 12.8 L2 15 Z" fill="#d8dde6"/></svg>
<div class="a t" style="left:929px;top:179.65px;font-size:14px;line-height:14px;color:#d8dde6;font-weight:400;">?</div>
<div class="a t" style="left:914.5px;top:209.27px;font-size:11.5px;line-height:11.5px;color:#d8d8d8;font-weight:400;letter-spacing:-0.446px;">Советы</div>
<div class="a t" style="left:924px;top:246.30px;font-size:15px;line-height:15px;color:#e0e0e0;font-weight:400;">Выделение объектов</div>
<div class="a t" style="left:737px;width:400px;text-align:right;top:314.77px;font-size:11.5px;line-height:11.5px;color:#d8d8d8">Чтобы выбрать объект, щелкните его.</div>
<div class="a t" style="left:763px;width:400px;text-align:right;top:332.77px;font-size:11.5px;line-height:11.5px;color:#d8d8d8">Удерживая нажатой клавишу <b>Alt</b>, чтобы</div>
<div class="a t" style="left:783.5px;width:400px;text-align:right;top:350.77px;font-size:11.5px;line-height:11.5px;color:#d8d8d8">выбрать объект, который находится за другим</div>
<div class="a t" style="left:772px;width:400px;text-align:right;top:368.77px;font-size:11.5px;line-height:11.5px;color:#d8d8d8">Нажмите клавишу <b>Ctrl</b>, чтобы выбрать</div>
<div class="a t" style="left:785px;width:400px;text-align:right;top:409.77px;font-size:11.5px;line-height:11.5px;color:#d8d8d8">Чтобы выбрать несколько объектов, щелкните</div>
<div class="a t" style="left:778px;width:400px;text-align:right;top:427.77px;font-size:11.5px;line-height:11.5px;color:#d8d8d8">их, удерживая нажатой клавишу</div>
<div class="a t" style="left:731px;width:400px;text-align:right;top:445.77px;font-size:11.5px;line-height:11.5px;color:#d8d8d8">Shift, или протащите указатель для</div>
<div class="a t" style="left:753px;width:400px;text-align:right;top:463.77px;font-size:11.5px;line-height:11.5px;color:#d8d8d8">создания выделяющей рамки вокруг</div>
<div class="a t" style="left:787.5999999999999px;width:400px;text-align:right;top:504.27px;font-size:11.5px;line-height:11.5px;color:#d8d8d8">Чтобы выбрать все объекты, дважды щелкните</div>
<div class="a" style="left:923px;top:552px;width:271px;height:1px;background:#8a8a8a;"></div>
<div class="a t" style="left:923px;top:567.30px;font-size:15px;line-height:15px;color:#e0e0e0;font-weight:400;">Подробнее</div>
<svg class="a" style="left:929px;top:597px;" width="24" height="24" viewBox="0 0 24 24"><circle cx="12" cy="12" r="10.5" fill="none" stroke="#d0d0d0" stroke-width="1.5"/><circle cx="12" cy="7" r="1.5" fill="#d0d0d0"/><rect x="10.8" y="10" width="2.4" height="8" fill="#d0d0d0"/></svg>
<div class="a t" style="left:983px;top:603.07px;font-size:13.5px;line-height:13.5px;color:#e0e0e0;font-weight:400;letter-spacing:0.226px;">Раздел справки</div>
<div class="a t" style="left:983px;top:624.27px;font-size:11.5px;line-height:11.5px;color:#3a96e0;font-weight:400;letter-spacing:0.228px;">Выделение объектов</div>
<svg class="a" style="left:929px;top:653px;" width="24" height="24" viewBox="0 0 24 24"><circle cx="12" cy="12" r="10.5" fill="none" stroke="#8c8c8c" stroke-width="1.5"/><path d="M9.5 7 L16.5 12 L9.5 17 Z" fill="#8c8c8c"/></svg>
<div class="a t" style="left:983px;top:659.07px;font-size:13.5px;line-height:13.5px;color:#e0e0e0;font-weight:400;letter-spacing:0.496px;">Webinar</div>
<div class="a t" style="left:983px;top:680.27px;font-size:11.5px;line-height:11.5px;color:#3a96e0;font-weight:400;letter-spacing:0.184px;">Работа с кривыми (для</div>
<svg class="a" style="left:1205px;top:234px;" width="11" height="8" viewBox="0 0 11 8"><path d="M5.5 0.5 L10.5 7 H0.5 Z" fill="#bbbbbb"/></svg>
<div class="a" style="left:1206px;top:249px;width:9px;height:318px;border-radius:4.5px;background:#aaaaaa"></div>
<svg class="a" style="left:1205px;top:687px;" width="11" height="8" viewBox="0 0 11 8"><path d="M5.5 7.5 L10.5 1 H0.5 Z" fill="#bbbbbb"/></svg>
<svg class="a" style="left:918px;top:710px;" width="19" height="19" viewBox="0 0 19 19"><path d="M2 9 L9.5 2 L17 9 M4 7.5 V17 H15 V7.5 M7.5 17 V12 H11.5 V17" fill="none" stroke="#d8d8d8" stroke-width="1.4" stroke-linejoin="round" stroke-linecap="round"/></svg>
<svg class="a" style="left:1159px;top:711px;" width="20" height="17" viewBox="0 0 20 17"><path d="M1.5 8.5 L8.5 2 V5.5 H18.5 V11.5 H8.5 V15 Z" fill="none" stroke="#d8d8d8" stroke-width="1.4" stroke-linejoin="round"/></svg>
<svg class="a" style="left:1191px;top:711px;" width="20" height="17" viewBox="0 0 20 17"><path d="M18.5 8.5 L11.5 2 V5.5 H1.5 V11.5 H11.5 V15 Z" fill="none" stroke="#5a5a5a" stroke-width="1.4" stroke-linejoin="round"/></svg>
<div class="a" style="left:1218px;top:173px;width:26px;height:108px;border-radius:0 5px 5px 0;background:#1f4d85"></div>
<svg class="a" style="left:1220px;top:180px;" width="22" height="20" viewBox="0 0 22 20"><path d="M1.5 7 L11 3 L20.5 7 L11 11 Z" fill="#d8dde6"/><path d="M5 9 V13.5 Q11 17 17 13.5 V9 L11 11.5 Z" fill="#d8dde6"/><path d="M19 7.5 V14" stroke="#d8dde6" stroke-width="1.3"/></svg>
<div class="a t" style="left:1236px;top:204px;font-size:11.5px;line-height:11.5px;color:#c8d8ea;transform-origin:0 0;transform:rotate(90deg)">Обучения</div>
<div class="a" style="left:1218px;top:284px;width:26px;height:98px;border-radius:0 5px 5px 0;background:#383838"></div>
<svg class="a" style="left:1220px;top:288px;" width="22" height="22" viewBox="0 0 22 22"><path d="M3 7 L8 2 L13 7 L8 12 Z" fill="none" stroke="#d0d0d0" stroke-width="1.6" stroke-linejoin="round"/><path d="M5 3.5 L2.5 1" stroke="#d0d0d0" stroke-width="1.3"/><text x="13.5" y="19" font-family="Liberation Sans" font-size="7" font-weight="700" fill="#d0d0d0">1F</text></svg>
<div class="a t" style="left:1236px;top:315px;font-size:11.5px;line-height:11.5px;color:#d0d0d0;transform-origin:0 0;transform:rotate(90deg)">Свойства</div>
<div class="a" style="left:1218px;top:391px;width:26px;height:102px;border-radius:0 5px 5px 0;background:#383838"></div>
<svg class="a" style="left:1221px;top:398px;" width="20" height="20" viewBox="0 0 20 20"><path d="M1.5 6.5 L10 2 L18.5 6.5 L10 11 Z" fill="#d0d0d0"/><path d="M1.5 10.5 L10 15 L18.5 10.5" fill="none" stroke="#d0d0d0" stroke-width="1.6" stroke-linejoin="round"/></svg>
<div class="a t" style="left:1236px;top:424px;font-size:11.5px;line-height:11.5px;color:#d0d0d0;transform-origin:0 0;transform:rotate(90deg)">Объекты</div>
<svg class="a" style="left:1224px;top:510px;" width="15" height="15" viewBox="0 0 15 15"><path d="M7.5 0.5 V14.5 M0.5 7.5 H14.5" stroke="#e0e0e0" stroke-width="2"/></svg>
<svg class="a" style="left:1252px;top:141px;" width="18" height="6" viewBox="0 0 18 6"><rect x="0.0" y="0.0" width="1.5" height="1.5" fill="#777"/><rect x="0.0" y="3.0" width="1.5" height="1.5" fill="#777"/><rect x="1.5" y="1.5" width="1.5" height="1.5" fill="#777"/><rect x="1.5" y="4.5" width="1.5" height="1.5" fill="#777"/><rect x="3.0" y="0.0" width="1.5" height="1.5" fill="#777"/><rect x="3.0" y="3.0" width="1.5" height="1.5" fill="#777"/><rect x="4.5" y="1.5" width="1.5" height="1.5" fill="#777"/><rect x="4.5" y="4.5" width="1.5" height="1.5" fill="#777"/><rect x="6.0" y="0.0" width="1.5" height="1.5" fill="#777"/><rect x="6.0" y="3.0" width="1.5" height="1.5" fill="#777"/><rect x="7.5" y="1.5" width="1.5" height="1.5" fill="#777"/><rect x="7.5" y="4.5" width="1.5" height="1.5" fill="#777"/><rect x="9.0" y="0.0" width="1.5" height="1.5" fill="#777"/><rect x="9.0" y="3.0" width="1.5" height="1.5" fill="#777"/><rect x="10.5" y="1.5" width="1.5" height="1.5" fill="#777"/><rect x="10.5" y="4.5" width="1.5" height="1.5" fill="#777"/><rect x="12.0" y="0.0" width="1.5" height="1.5" fill="#777"/><rect x="12.0" y="3.0" width="1.5" height="1.5" fill="#777"/><rect x="13.5" y="1.5" width="1.5" height="1.5" fill="#777"/><rect x="13.5" y="4.5" width="1.5" height="1.5" fill="#777"/><rect x="15.0" y="0.0" width="1.5" height="1.5" fill="#777"/><rect x="15.0" y="3.0" width="1.5" height="1.5" fill="#777"/><rect x="16.5" y="1.5" width="1.5" height="1.5" fill="#777"/><rect x="16.5" y="4.5" width="1.5" height="1.5" fill="#777"/></svg>
<svg class="a" style="left:1256px;top:155px;" width="8" height="12" viewBox="0 0 8 12"><path d="M2 1.5 L6 6 L2 10.5" fill="none" stroke="#d0d0d0" stroke-width="1.5" stroke-linejoin="round" stroke-linecap="round"/></svg>
<svg class="a" style="left:1254px;top:172px;" width="16" height="17" viewBox="0 0 16 17"><path d="M2 15 L3 11.5 L9.5 5 L12 7.5 L5.5 14 Z" fill="none" stroke="#5a5a5a" stroke-width="1.5" stroke-linejoin="round"/><circle cx="12.5" cy="4.5" r="3" fill="#5a5a5a"/><path d="M8.5 4 L13 8.5" stroke="#5a5a5a" stroke-width="2"/></svg>
<svg class="a" style="left:1255px;top:195px;" width="12" height="8" viewBox="0 0 12 8"><path d="M1 6.5 L6 1.5 L11 6.5" fill="none" stroke="#5a5a5a" stroke-width="2"/></svg>
<div class="a" style="left:1253px;top:207px;width:17px;height:17px;background:#fff;border-radius:3px 3px 0 0"></div>
<svg class="a" style="left:1253px;top:207px;" width="17" height="17" viewBox="0 0 17 17"><path d="M2 15 L15 2" stroke="#e88aa0" stroke-width="1"/></svg>
<div class="a" style="left:1253px;top:224px;width:17px;height:469px"><div style="height:16.75px;background:#000000"></div><div style="height:16.75px;background:#1a1a1a"></div><div style="height:16.75px;background:#333333"></div><div style="height:16.75px;background:#4d4d4d"></div><div style="height:16.75px;background:#666666"></div><div style="height:16.75px;background:#808080"></div><div style="height:16.75px;background:#999999"></div><div style="height:16.75px;background:#b3b3b3"></div><div style="height:16.75px;background:#cccccc"></div><div style="height:16.75px;background:#e6e6e6"></div><div style="height:16.75px;background:#ffffff"></div><div style="height:16.75px;background:#0000ff"></div><div style="height:16.75px;background:#00ffff"></div><div style="height:16.75px;background:#00ff00"></div><div style="height:16.75px;background:#ffff00"></div><div style="height:16.75px;background:#ff0000"></div><div style="height:16.75px;background:#ff00ff"></div><div style="height:16.75px;background:#9900cc"></div><div style="height:16.75px;background:#ff6600"></div><div style="height:16.75px;background:#ff99cc"></div><div style="height:16.75px;background:#663333"></div><div style="height:16.75px;background:#ccccff"></div><div style="height:16.75px;background:#9999ff"></div><div style="height:16.75px;background:#6699ff"></div><div style="height:16.75px;background:#6666ff"></div><div style="height:16.75px;background:#6666cc"></div><div style="height:16.75px;background:#003399"></div><div style="height:16.75px;background:#000066"></div></div>
<svg class="a" style="left:1255px;top:697px;" width="12" height="8" viewBox="0 0 12 8"><path d="M1 1.5 L6 6.5 L11 1.5" fill="none" stroke="#d0d0d0" stroke-width="2"/></svg>
<svg class="a" style="left:1255px;top:714px;" width="12" height="10" viewBox="0 0 12 10"><path d="M1.5 1 L5.5 5 L1.5 9 M6.5 1 L10.5 5 L6.5 9" fill="none" stroke="#d0d0d0" stroke-width="1.4" stroke-linejoin="round" stroke-linecap="round"/></svg>
<div class="a" style="left:203px;top:208px;width:251px;height:254px;background:#262626;border:1px solid #4c4c4c;border-radius:5px;box-shadow:0 1px 2px rgba(0,0,0,0.25)"></div>
<svg class="a" style="left:206px;top:212px;" width="20" height="20" viewBox="0 0 20 20"><path d="M1.5 5 V1.5 H5 M15 1.5 H18.5 V5 M18.5 15 V18.5 H15 M5 18.5 H1.5 V15" fill="none" stroke="#d8d8d8" stroke-width="1.5" stroke-linejoin="round" stroke-linecap="round"/><rect x="4.2" y="4.2" width="11.6" height="11.6" rx="1" fill="#d8d8e0"/></svg>
<div class="a t" style="left:236px;top:216.69px;font-size:11px;line-height:11px;color:#dedede;font-weight:400;"><u>П</u>олноэкранный просмотр</div>
<div class="a t" style="left:330px;width:99px;text-align:right;top:216.69px;font-size:11px;line-height:11px;color:#dedede">F9</div>
<div class="a t" style="left:236px;top:241.19px;font-size:11px;line-height:11px;color:#dedede;font-weight:400;"><u>В</u>ид</div>
<div class="a t" style="left:236px;top:270.69px;font-size:11px;line-height:11px;color:#dedede;font-weight:400;"><u>С</u>оздать объект</div>
<div class="a t" style="left:236px;top:294.19px;font-size:11px;line-height:11px;color:#dedede;font-weight:400;">Со<u>з</u>дать новую симметрию</div>
<div class="a t" style="left:330px;width:99px;text-align:right;top:294.19px;font-size:11px;line-height:11px;color:#dedede">Alt+S</div>
<div class="a t" style="left:236px;top:317.69px;font-size:11px;line-height:11px;color:#dedede;font-weight:400;"><u>И</u>мпорт...</div>
<div class="a t" style="left:330px;width:99px;text-align:right;top:317.69px;font-size:11px;line-height:11px;color:#dedede">Ctrl+I</div>
<div class="a t" style="left:236px;top:341.69px;font-size:11px;line-height:11px;color:#dedede;font-weight:400;"><u>О</u>бъект...</div>
<div class="a t" style="left:236px;top:365.19px;font-size:11px;line-height:11px;color:#dedede;font-weight:400;"><u>В</u>ставить</div>
<div class="a t" style="left:330px;width:99px;text-align:right;top:365.19px;font-size:11px;line-height:11px;color:#dedede">Ctrl+V</div>
<div class="a t" style="left:236px;top:388.69px;font-size:11px;line-height:11px;color:#dedede;font-weight:400;">Вставить в <u>в</u>ид</div>
<div class="a t" style="left:330px;width:99px;text-align:right;top:388.69px;font-size:11px;line-height:11px;color:#dedede">Ctrl+Shift+V</div>
<div class="a t" style="left:236px;top:418.69px;font-size:11px;line-height:11px;color:#dedede;font-weight:400;"><u>С</u>войства документа...</div>
<div class="a t" style="left:236px;top:442.69px;font-size:11px;line-height:11px;color:#dedede;font-weight:400;"><u>С</u>войства</div>
<div class="a t" style="left:330px;width:99px;text-align:right;top:442.69px;font-size:11px;line-height:11px;color:#dedede">Alt+Enter</div>
<svg class="a" style="left:441px;top:241px;" width="7" height="10" viewBox="0 0 7 10"><path d="M1.5 1 L5.5 5 L1.5 9" fill="none" stroke="#d8d8d8" stroke-width="1.5"/></svg>
<svg class="a" style="left:441px;top:271px;" width="7" height="10" viewBox="0 0 7 10"><path d="M1.5 1 L5.5 5 L1.5 9" fill="none" stroke="#d8d8d8" stroke-width="1.5"/></svg>
<div class="a" style="left:231px;top:261px;width:222px;height:1px;background:#474747;"></div>
<div class="a" style="left:231px;top:409px;width:222px;height:1px;background:#474747;"></div>
<svg class="a" style="left:206px;top:288px;" width="20" height="20" viewBox="0 0 20 20"><circle cx="4" cy="6" r="2.3" fill="none" stroke="#d0d0d0" stroke-width="1.2" stroke-linejoin="round" stroke-linecap="round"/><circle cx="4" cy="12" r="2.3" fill="none" stroke="#d0d0d0" stroke-width="1.2" stroke-linejoin="round" stroke-linecap="round"/><circle cx="8" cy="16.5" r="2.3" fill="none" stroke="#d0d0d0" stroke-width="1.2" stroke-linejoin="round" stroke-linecap="round"/><circle cx="14" cy="16" r="2.3" fill="none" stroke="#d0d0d0" stroke-width="1.2" stroke-linejoin="round" stroke-linecap="round"/><circle cx="9" cy="3" r="2.3" fill="none" stroke="#d0d0d0" stroke-width="1.2" stroke-linejoin="round" stroke-linecap="round"/><rect x="12" y="1" width="7.5" height="7.5" rx="1" fill="#3fb27f"/><path d="M15.75 2.8 V6.7 M13.8 4.75 H17.7" stroke="#1a4a34" stroke-width="1.2"/></svg>
<svg class="a" style="left:206px;top:313px;" width="20" height="20" viewBox="0 0 20 20"><path d="M6 6 H3.5 Q2 6 2 7.5 V16 Q2 17.5 3.5 17.5 H15.5 Q17 17.5 17 16 V7.5 Q17 6 15.5 6 H13" fill="none" stroke="#d0d0d0" stroke-width="1.4" stroke-linejoin="round" stroke-linecap="round"/><path d="M9.5 1.5 V12 M6.5 9 L9.5 12 L12.5 9" fill="none" stroke="#d0d0d0" stroke-width="1.4" stroke-linejoin="round" stroke-linecap="round"/></svg>
<svg class="a" style="left:206px;top:336px;" width="20" height="20" viewBox="0 0 20 20"><circle cx="6" cy="7" r="3" fill="none" stroke="#d0d0d0" stroke-width="1.3" stroke-linejoin="round" stroke-linecap="round"/><path d="M1.5 17 L4.5 11.5 L7.5 17 Z" fill="none" stroke="#d0d0d0" stroke-width="1.2" stroke-linejoin="round" stroke-linecap="round"/><rect x="9" y="10.5" width="7" height="6.5" rx="1" fill="none" stroke="#d0d0d0" stroke-width="1.3" stroke-linejoin="round" stroke-linecap="round"/><rect x="12" y="1" width="7.5" height="7.5" rx="1" fill="#3fb27f"/><path d="M15.75 2.8 V6.7 M13.8 4.75 H17.7" stroke="#1a4a34" stroke-width="1.2"/></svg>
<svg class="a" style="left:206px;top:360px;" width="20" height="20" viewBox="0 0 20 20"><path d="M5 3.5 H3.5 Q2 3.5 2 5 V15.5 Q2 17 3.5 17 H5.5" fill="none" stroke="#d0d0d0" stroke-width="1.3" stroke-linejoin="round" stroke-linecap="round"/><path d="M11.5 3.5 H13 Q14.5 3.5 14.5 5 V7.5" fill="none" stroke="#d0d0d0" stroke-width="1.3" stroke-linejoin="round" stroke-linecap="round"/><rect x="5" y="1.5" width="7" height="3.5" rx="1" fill="#d0d0d0"/><rect x="7" y="8" width="9.5" height="10.5" rx="1.5" fill="none" stroke="#d0d0d0" stroke-width="1.3" stroke-linejoin="round" stroke-linecap="round"/></svg>
<svg class="a" style="left:206px;top:384px;" width="20" height="20" viewBox="0 0 20 20"><path d="M5 3.5 H3.5 Q2 3.5 2 5 V15.5 Q2 17 3.5 17 H5.5" fill="none" stroke="#d0d0d0" stroke-width="1.3" stroke-linejoin="round" stroke-linecap="round"/><path d="M11.5 3.5 H13 Q14.5 3.5 14.5 5 V7.5" fill="none" stroke="#d0d0d0" stroke-width="1.3" stroke-linejoin="round" stroke-linecap="round"/><rect x="5" y="1.5" width="7" height="3.5" rx="1" fill="#d0d0d0"/><rect x="7" y="8" width="9.5" height="10.5" rx="1.5" fill="none" stroke="#d0d0d0" stroke-width="1.3" stroke-linejoin="round" stroke-linecap="round"/><path d="M11.75 10.5 V16 M9 13.25 H14.5" stroke="#38a8e8" stroke-width="1.4"/></svg>
<svg class="a" style="left:206px;top:414px;" width="20" height="20" viewBox="0 0 20 20"><path d="M5 1.5 H11.5 Q13 1.5 13 3 V9 M13 18.5 H3.5 Q2 18.5 2 17 V4.5 L5 1.5" fill="none" stroke="#d0d0d0" stroke-width="1.3" stroke-linejoin="round" stroke-linecap="round"/><path d="M12 12 H18 M12 14.5 H18 M12 17 H18 M15 11 V18" stroke="#d0d0d0" stroke-width="1" stroke-dasharray="1.5 0.8"/></svg>
<svg class="a" style="left:208px;top:440px;" width="16" height="15" viewBox="0 0 16 15"><path d="M1.5 8 L5.8 13 L14.5 1.5" fill="none" stroke="#dedede" stroke-width="1.6" stroke-linejoin="round"/></svg>
<div class="a" style="left:454px;top:234px;width:317px;height:263px;background:#262626;border:1px solid #4c4c4c;border-radius:5px;box-shadow:0 1px 2px rgba(0,0,0,0.25)"></div>
<div class="a" style="left:456px;top:260px;width:313px;height:23px;border-radius:3px;background:#474747"></div>
<div class="a" style="left:454px;top:235px;width:26px;height:25px;border-radius:4px 0 0 0;background:#1f4d85"></div>
<svg class="a" style="left:458px;top:238px;" width="19" height="19" viewBox="0 0 19 19"><path d="M6.5 4 V2.5 Q6.5 1.5 7.5 1.5 H11.5 Q12.5 1.5 12.5 2.5 V4" fill="none" stroke="#f08a7a" stroke-width="1.3"/><rect x="1.5" y="4" width="16" height="13" rx="1.5" fill="#f0604a"/><path d="M1.5 10 H17.5" stroke="#1f4d85" stroke-width="1.2"/><rect x="4.5" y="8" width="1.8" height="4" fill="#1f4d85"/><rect x="12.7" y="8" width="1.8" height="4" fill="#1f4d85"/></svg>
<div class="a" style="left:454px;top:283px;width:26px;height:25px;background:#1f4d85"></div>
<svg class="a" style="left:458px;top:286px;" width="19" height="19" viewBox="0 0 19 19"><path d="M9.5 8.5 V5.5 Q9.5 3 7 3 H4 M5.5 1 L3.5 3 L5.5 5" fill="none" stroke="#d8e4f0" stroke-width="1.3"/><rect x="1.5" y="10" width="16" height="7" rx="1" fill="none" stroke="#d8e4f0" stroke-width="1.2"/><circle cx="5.5" cy="13.5" r="1.3" fill="none" stroke="#d8e4f0" stroke-width="1"/><circle cx="9.5" cy="13.5" r="1.3" fill="none" stroke="#d8e4f0" stroke-width="1"/><circle cx="13.5" cy="13.5" r="1.3" fill="none" stroke="#d8e4f0" stroke-width="1"/></svg>
<div class="a t" style="left:488px;top:242.69px;font-size:11px;line-height:11px;color:#dedede;font-weight:400;"><u>П</u>анель инструментов</div>
<div class="a t" style="left:488px;top:266.69px;font-size:11px;line-height:11px;color:#e6e6e6;font-weight:400;">Ц<u>в</u>етовые палитры</div>
<div class="a t" style="left:488px;top:290.19px;font-size:11px;line-height:11px;color:#dedede;font-weight:400;"><u>П</u>анель свойств</div>
<div class="a t" style="left:488px;top:313.69px;font-size:11px;line-height:11px;color:#dedede;font-weight:400;">Строка состояния</div>
<div class="a t" style="left:488px;top:337.19px;font-size:11px;line-height:11px;color:#dedede;font-weight:400;"><u>Л</u>инейки</div>
<div class="a t" style="left:488px;top:360.69px;font-size:11px;line-height:11px;color:#dedede;font-weight:400;">Сетка <u>д</u>окумента</div>
<div class="a t" style="left:488px;top:384.69px;font-size:11px;line-height:11px;color:#7a7a7a;font-weight:400;">Пиксе<u>л</u>ьная сетка</div>
<div class="a t" style="left:488px;top:408.19px;font-size:11px;line-height:11px;color:#dedede;font-weight:400;"><u>Н</u>аправляющие</div>
<div class="a t" style="left:488px;top:431.69px;font-size:11px;line-height:11px;color:#dedede;font-weight:400;">Пе<u>ч</u>атаемая область</div>
<div class="a t" style="left:488px;top:455.19px;font-size:11px;line-height:11px;color:#dedede;font-weight:400;">Просмотр ролловеров <u>в</u> реальном времени</div>
<div class="a t" style="left:488px;top:478.69px;font-size:11px;line-height:11px;color:#dedede;font-weight:400;">Ото<u>б</u>ражение рамок текста</div>
<div class="a t" style="left:650px;width:95px;text-align:right;top:337.19px;font-size:11px;line-height:11px;color:#dedede">Alt+Shift+R</div>
<svg class="a" style="left:757px;top:267px;" width="7" height="10" viewBox="0 0 7 10"><path d="M1.5 1 L5.5 5 L1.5 9" fill="none" stroke="#d8d8d8" stroke-width="1.5"/></svg>
<svg class="a" style="left:460px;top:312px;" width="16" height="15" viewBox="0 0 16 15"><path d="M1.5 8 L5.8 13 L14.5 1.5" fill="none" stroke="#dedede" stroke-width="1.6" stroke-linejoin="round"/></svg>
<svg class="a" style="left:460px;top:335px;" width="16" height="15" viewBox="0 0 16 15"><path d="M1.5 8 L5.8 13 L14.5 1.5" fill="none" stroke="#dedede" stroke-width="1.6" stroke-linejoin="round"/></svg>
<svg class="a" style="left:460px;top:406px;" width="16" height="15" viewBox="0 0 16 15"><path d="M1.5 8 L5.8 13 L14.5 1.5" fill="none" stroke="#dedede" stroke-width="1.6" stroke-linejoin="round"/></svg>
<svg class="a" style="left:460px;top:477px;" width="16" height="15" viewBox="0 0 16 15"><path d="M1.5 8 L5.8 13 L14.5 1.5" fill="none" stroke="#dedede" stroke-width="1.6" stroke-linejoin="round"/></svg>
<div class="a" style="left:769px;top:260px;width:256px;height:315px;background:#262626;border:1px solid #4c4c4c;border-radius:5px;box-shadow:0 1px 2px rgba(0,0,0,0.25)"></div>
<div class="a t" style="left:803px;top:268.69px;font-size:11px;line-height:11px;color:#7a7a7a;font-weight:400;">Добавить цвета из выбранного...</div>
<div class="a t" style="left:803px;top:292.69px;font-size:11px;line-height:11px;color:#dedede;font-weight:400;">Добавить цвета из документа...</div>
<div class="a t" style="left:803px;top:322.69px;font-size:11px;line-height:11px;color:#7a7a7a;font-weight:400;">Созда<u>т</u>ь палитру из выделения...</div>
<div class="a t" style="left:803px;top:346.69px;font-size:11px;line-height:11px;color:#dedede;font-weight:400;">Создать палитру из документа...</div>
<div class="a t" style="left:803px;top:370.19px;font-size:11px;line-height:11px;color:#dedede;font-weight:400;"><u>О</u>ткрыть палитру...</div>
<div class="a t" style="left:803px;top:393.69px;font-size:11px;line-height:11px;color:#dedede;font-weight:400;"><u>Н</u>ет</div>
<div class="a t" style="left:803px;top:423.69px;font-size:11px;line-height:11px;color:#dedede;font-weight:400;"><u>Р</u>едактор палитр...</div>
<div class="a t" style="left:803px;top:447.69px;font-size:11px;line-height:11px;color:#dedede;font-weight:400;">Палитры</div>
<div class="a t" style="left:803px;top:477.69px;font-size:11px;line-height:11px;color:#dedede;font-weight:400;">Последние</div>
<div class="a t" style="left:803px;top:507.69px;font-size:11px;line-height:11px;color:#dedede;font-weight:400;">Палитра по умолчанию</div>
<div class="a t" style="left:803px;top:531.69px;font-size:11px;line-height:11px;color:#dedede;font-weight:400;">Document Palette</div>
<div class="a t" style="left:803px;top:555.69px;font-size:11px;line-height:11px;color:#dedede;font-weight:400;">Color Styles Palette</div>
<div class="a" style="left:798px;top:314px;width:227px;height:1px;background:#474747;"></div>
<div class="a" style="left:798px;top:414px;width:227px;height:1px;background:#474747;"></div>
<div class="a" style="left:798px;top:468px;width:227px;height:1px;background:#474747;"></div>
<div class="a" style="left:798px;top:498px;width:227px;height:1px;background:#474747;"></div>
<svg class="a" style="left:1011px;top:478px;" width="7" height="10" viewBox="0 0 7 10"><path d="M1.5 1 L5.5 5 L1.5 9" fill="none" stroke="#d8d8d8" stroke-width="1.5"/></svg>
<svg class="a" style="left:776px;top:506px;" width="16" height="15" viewBox="0 0 16 15"><path d="M1.5 8 L5.8 13 L14.5 1.5" fill="none" stroke="#dedede" stroke-width="1.6" stroke-linejoin="round"/></svg>
<svg class="a" style="left:776px;top:530px;" width="16" height="15" viewBox="0 0 16 15"><path d="M1.5 8 L5.8 13 L14.5 1.5" fill="none" stroke="#dedede" stroke-width="1.6" stroke-linejoin="round"/></svg>
<svg class="a" style="left:774px;top:264px;" width="20" height="20" viewBox="0 0 20 20"><rect x="1.0" y="4.0" width="2.2" height="2.2" fill="#4a4a4a"/><rect x="1.0" y="7.2" width="2.2" height="2.2" fill="#4a4a4a"/><rect x="1.0" y="10.4" width="2.2" height="2.2" fill="#4a4a4a"/><rect x="1.0" y="13.6" width="2.2" height="2.2" fill="#4a4a4a"/><rect x="1.0" y="16.8" width="2.2" height="2.2" fill="#4a4a4a"/><rect x="4.2" y="4.0" width="2.2" height="2.2" fill="#4a4a4a"/><rect x="4.2" y="7.2" width="2.2" height="2.2" fill="#4a4a4a"/><rect x="4.2" y="10.4" width="2.2" height="2.2" fill="#4a4a4a"/><rect x="4.2" y="13.6" width="2.2" height="2.2" fill="#4a4a4a"/><rect x="4.2" y="16.8" width="2.2" height="2.2" fill="#4a4a4a"/><rect x="7.4" y="4.0" width="2.2" height="2.2" fill="#4a4a4a"/><rect x="7.4" y="7.2" width="2.2" height="2.2" fill="#4a4a4a"/><rect x="7.4" y="10.4" width="2.2" height="2.2" fill="#4a4a4a"/><rect x="7.4" y="13.6" width="2.2" height="2.2" fill="#4a4a4a"/><rect x="7.4" y="16.8" width="2.2" height="2.2" fill="#4a4a4a"/><rect x="10.6" y="4.0" width="2.2" height="2.2" fill="#4a4a4a"/><rect x="10.6" y="7.2" width="2.2" height="2.2" fill="#4a4a4a"/><rect x="10.6" y="10.4" width="2.2" height="2.2" fill="#4a4a4a"/><rect x="10.6" y="13.6" width="2.2" height="2.2" fill="#4a4a4a"/><rect x="10.6" y="16.8" width="2.2" height="2.2" fill="#4a4a4a"/><rect x="11" y="0" width="7.5" height="7.5" rx="1" fill="#4e4e4e"/><path d="M14.75 1.8 V5.7 M12.8 3.75 H16.7" stroke="#333" stroke-width="1.2"/></svg>
<svg class="a" style="left:775px;top:287px;" width="20" height="20" viewBox="0 0 20 20"><path d="M4 4.5 L6.5 2 H11 V7" fill="none" stroke="#d0d0d0" stroke-width="1.2"/><path d="M2.5 6 V16.5 Q2.5 18 4 18 H12 Q13.5 18 13.5 16.5 V8" fill="none" stroke="#d0d0d0" stroke-width="1.2"/><rect x="4.5" y="6" width="3.5" height="4" fill="#e8792a"/><rect x="8.5" y="10" width="3.5" height="3.5" fill="#e8792a"/><rect x="4.5" y="10" width="3.5" height="3.5" fill="#f06c7c"/><rect x="4.5" y="13.5" width="3.5" height="3.5" fill="#3fb27f"/><rect x="8.5" y="13.5" width="3.5" height="3.5" fill="#38a8e8"/><rect x="11" y="0" width="7.5" height="7.5" rx="1" fill="#3fb27f"/><path d="M14.75 1.8 V5.7 M12.8 3.75 H16.7" stroke="#1a4a34" stroke-width="1.2"/></svg>
<svg class="a" style="left:775px;top:317px;" width="20" height="20" viewBox="0 0 20 20"><path d="M4 4.5 L6.5 2 H11 V7" fill="none" stroke="#5a5a5a" stroke-width="1.2"/><path d="M2.5 6 V16.5 Q2.5 18 4 18 H12 Q13.5 18 13.5 16.5 V8" fill="none" stroke="#5a5a5a" stroke-width="1.2"/><rect x="4.5" y="6" width="3.5" height="4" fill="#444"/><rect x="8.5" y="10" width="3.5" height="3.5" fill="#444"/><rect x="4.5" y="10" width="3.5" height="3.5" fill="#444"/><rect x="4.5" y="13.5" width="3.5" height="3.5" fill="#444"/><rect x="8.5" y="13.5" width="3.5" height="3.5" fill="#444"/><rect x="11" y="0" width="7.5" height="7.5" rx="1" fill="#555"/><path d="M14.75 1.8 V5.7 M12.8 3.75 H16.7" stroke="#333" stroke-width="1.2"/></svg>
<svg class="a" style="left:775px;top:341px;" width="20" height="20" viewBox="0 0 20 20"><path d="M4 4.5 L6.5 2 H11 V7" fill="none" stroke="#d0d0d0" stroke-width="1.2"/><path d="M2.5 6 V16.5 Q2.5 18 4 18 H12 Q13.5 18 13.5 16.5 V8" fill="none" stroke="#d0d0d0" stroke-width="1.2"/><rect x="4.5" y="6" width="3.5" height="4" fill="#e8792a"/><rect x="8.5" y="10" width="3.5" height="3.5" fill="#e8792a"/><rect x="4.5" y="10" width="3.5" height="3.5" fill="#f06c7c"/><rect x="4.5" y="13.5" width="3.5" height="3.5" fill="#3fb27f"/><rect x="8.5" y="13.5" width="3.5" height="3.5" fill="#38a8e8"/><rect x="11" y="0" width="7.5" height="7.5" rx="1" fill="#3fb27f"/><path d="M14.75 1.8 V5.7 M12.8 3.75 H16.7" stroke="#1a4a34" stroke-width="1.2"/></svg>
<svg class="a" style="left:775px;top:365px;" width="20" height="20" viewBox="0 0 20 20"><path d="M4 4.5 L6.5 2 H11 V7" fill="none" stroke="#d0d0d0" stroke-width="1.2"/><path d="M2.5 6 V16.5 Q2.5 18 4 18 H12 Q13.5 18 13.5 16.5 V8" fill="none" stroke="#d0d0d0" stroke-width="1.2"/><rect x="4.5" y="6" width="3.5" height="4" fill="#e8792a"/><rect x="8.5" y="10" width="3.5" height="3.5" fill="#e8792a"/><rect x="4.5" y="10" width="3.5" height="3.5" fill="#f06c7c"/><rect x="4.5" y="13.5" width="3.5" height="3.5" fill="#3fb27f"/><rect x="8.5" y="13.5" width="3.5" height="3.5" fill="#38a8e8"/><path d="M12 6.5 V2 H14.5 L15.5 3 H18.5 V6.5 Z" fill="none" stroke="#d0d0d0" stroke-width="1.1"/></svg>
<svg class="a" style="left:775px;top:389px;" width="20" height="20" viewBox="0 0 20 20"><path d="M4 4.5 L6.5 2 H11 V7" fill="none" stroke="#d0d0d0" stroke-width="1.2"/><path d="M2.5 6 V16.5 Q2.5 18 4 18 H12 Q13.5 18 13.5 16.5 V8" fill="none" stroke="#d0d0d0" stroke-width="1.2"/><rect x="4.5" y="6" width="3.5" height="4" fill="#e8792a"/><rect x="8.5" y="10" width="3.5" height="3.5" fill="#e8792a"/><rect x="4.5" y="10" width="3.5" height="3.5" fill="#f06c7c"/><rect x="4.5" y="13.5" width="3.5" height="3.5" fill="#3fb27f"/><rect x="8.5" y="13.5" width="3.5" height="3.5" fill="#38a8e8"/><circle cx="15.5" cy="4" r="3.5" fill="#e85a4a"/><path d="M13.5 4 H17.5" stroke="#fff" stroke-width="1.1"/></svg>
<svg class="a" style="left:775px;top:419px;" width="20" height="20" viewBox="0 0 20 20"><path d="M4 4.5 L6.5 2 H11 V7" fill="none" stroke="#d0d0d0" stroke-width="1.2"/><path d="M2.5 6 V16.5 Q2.5 18 4 18 H12 Q13.5 18 13.5 16.5 V8" fill="none" stroke="#d0d0d0" stroke-width="1.2"/><rect x="4.5" y="6" width="3.5" height="4" fill="#e8792a"/><rect x="8.5" y="10" width="3.5" height="3.5" fill="#e8792a"/><rect x="4.5" y="10" width="3.5" height="3.5" fill="#f06c7c"/><rect x="4.5" y="13.5" width="3.5" height="3.5" fill="#3fb27f"/><rect x="8.5" y="13.5" width="3.5" height="3.5" fill="#38a8e8"/><path d="M12 9 L18.5 2.5" stroke="#d0d0d0" stroke-width="1.8"/></svg>
</div></div>
</body></html>
